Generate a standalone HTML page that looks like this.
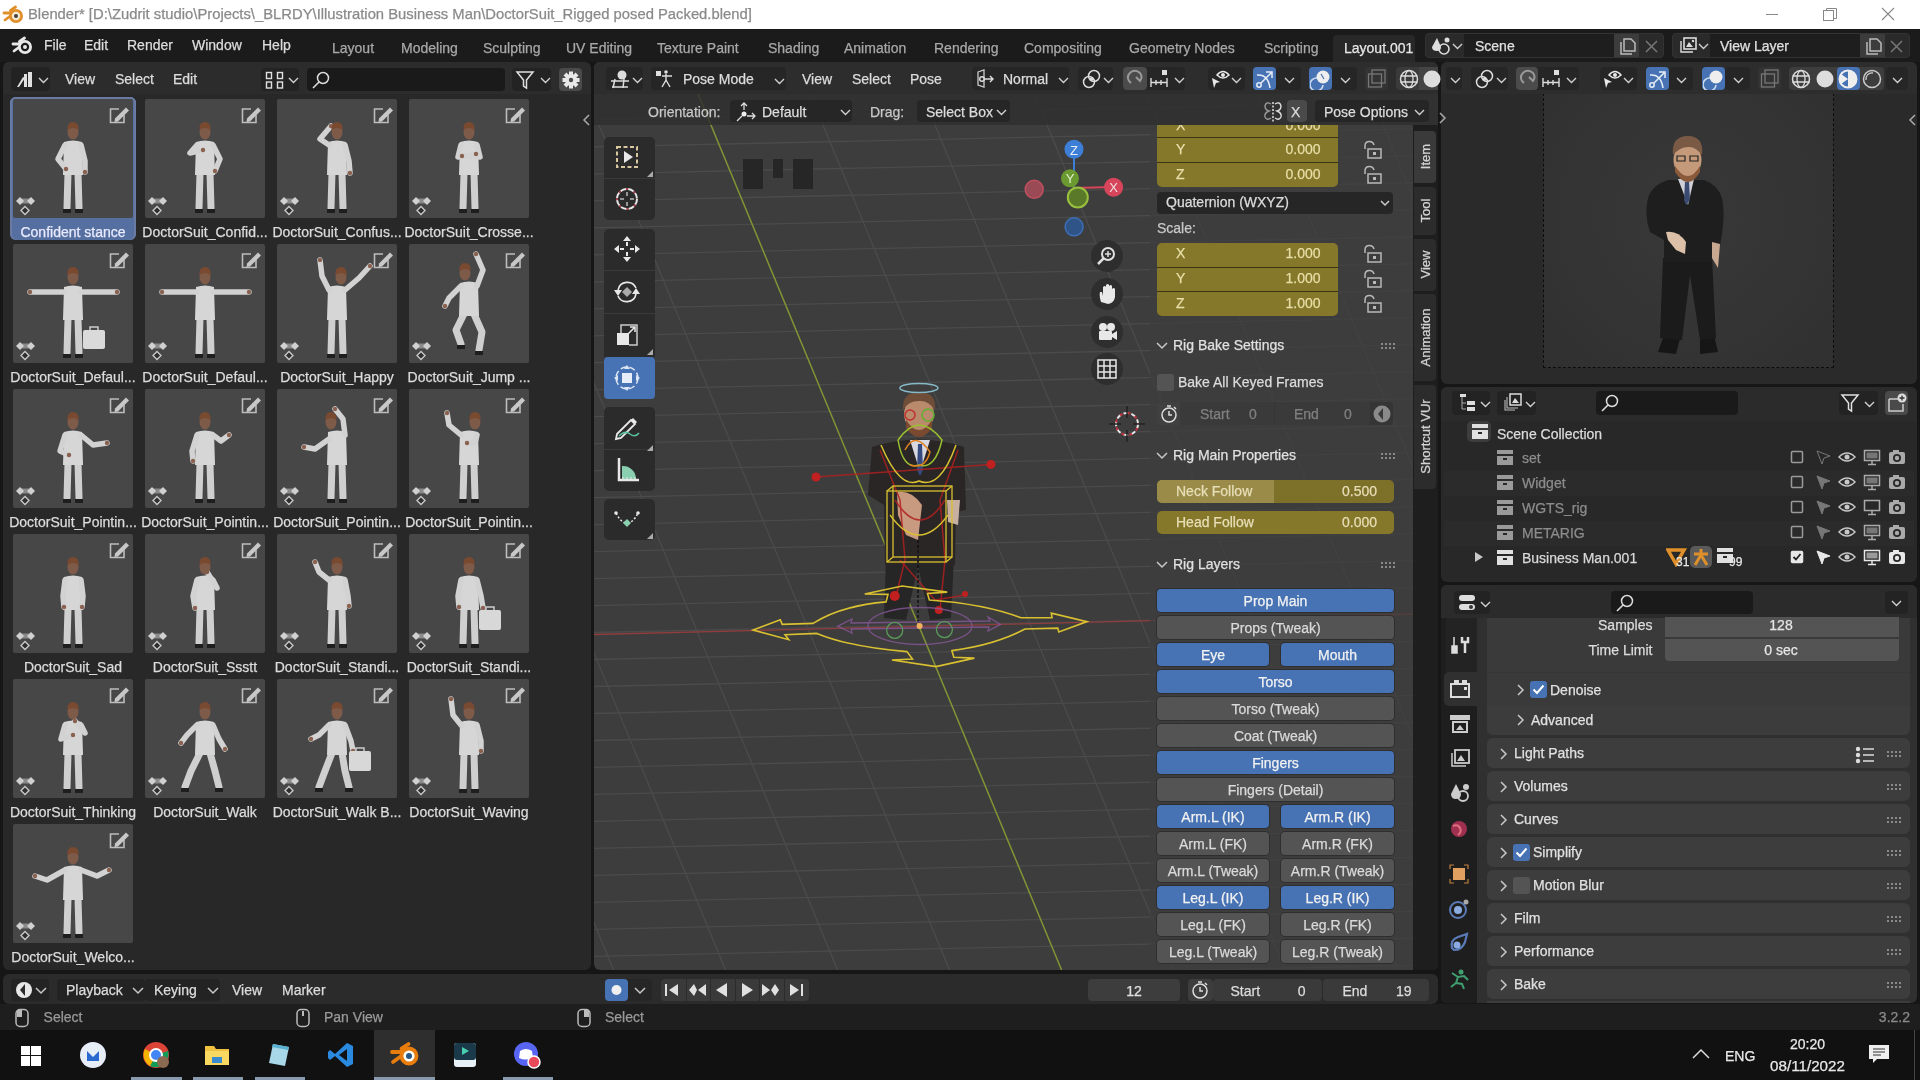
<!DOCTYPE html><html><head><meta charset="utf-8"><style>
*{margin:0;padding:0;box-sizing:border-box}
html,body{width:1920px;height:1080px;overflow:hidden;background:#161616;font-family:"Liberation Sans",sans-serif}
div,svg{position:absolute}
.t{white-space:nowrap;line-height:1;-webkit-text-stroke:0.25px currentColor}
</style></head><body><div id="root" style="left:0;top:0;width:1920px;height:1080px;will-change:transform"><div style="left:0px;top:0px;width:1920px;height:29px;background:#ffffff;"></div>
<div class="t" style="left:28px;top:6.97px;font-size:14.8px;color:#8a8a8a;">Blender* [D:\Zudrit studio\Projects\_BLRDY\Illustration Business Man\DoctorSuit_Rigged posed Packed.blend]</div>
<svg style="position:absolute;left:1760px;top:6px;" width="24" height="18" viewBox="0 0 24 18"><line x1="6" y1="8.5" x2="18" y2="8.5" stroke="#888" stroke-width="1"/></svg>
<svg style="position:absolute;left:1817px;top:6px;" width="24" height="18" viewBox="0 0 24 18"><rect x="6.5" y="4.5" width="10" height="10" fill="none" stroke="#888"/><path d="M9.5 4.5 V2.5 H19.5 V12.5 H16.5" fill="none" stroke="#888"/></svg>
<svg style="position:absolute;left:1876px;top:4px;" width="24" height="22" viewBox="0 0 24 22"><path d="M6 4 L18 16 M18 4 L6 16" stroke="#888" stroke-width="1.1"/></svg>
<div style="left:0px;top:29px;width:1920px;height:33px;background:#1b1b1b;"></div>
<div class="t" style="left:44px;top:38.15px;font-size:14px;color:#dcdcdc;">File</div>
<div class="t" style="left:84px;top:38.15px;font-size:14px;color:#dcdcdc;">Edit</div>
<div class="t" style="left:127px;top:38.15px;font-size:14px;color:#dcdcdc;">Render</div>
<div class="t" style="left:192px;top:38.15px;font-size:14px;color:#dcdcdc;">Window</div>
<div class="t" style="left:262px;top:38.15px;font-size:14px;color:#dcdcdc;">Help</div>
<div class="t" style="left:332px;top:41.15px;font-size:14px;color:#a8a8a8;">Layout</div>
<div class="t" style="left:401px;top:41.15px;font-size:14px;color:#a8a8a8;">Modeling</div>
<div class="t" style="left:483px;top:41.15px;font-size:14px;color:#a8a8a8;">Sculpting</div>
<div class="t" style="left:566px;top:41.15px;font-size:14px;color:#a8a8a8;">UV Editing</div>
<div class="t" style="left:657px;top:41.15px;font-size:14px;color:#a8a8a8;">Texture Paint</div>
<div class="t" style="left:768px;top:41.15px;font-size:14px;color:#a8a8a8;">Shading</div>
<div class="t" style="left:844px;top:41.15px;font-size:14px;color:#a8a8a8;">Animation</div>
<div class="t" style="left:934px;top:41.15px;font-size:14px;color:#a8a8a8;">Rendering</div>
<div class="t" style="left:1024px;top:41.15px;font-size:14px;color:#a8a8a8;">Compositing</div>
<div class="t" style="left:1129px;top:41.15px;font-size:14px;color:#a8a8a8;">Geometry Nodes</div>
<div class="t" style="left:1264px;top:41.15px;font-size:14px;color:#a8a8a8;">Scripting</div>
<div style="left:1333px;top:35px;width:82px;height:27px;background:#282828;border-radius:4px;border-radius:4px 4px 0 0"></div>
<div class="t" style="left:1344px;top:41.15px;font-size:14px;color:#e6e6e6;">Layout.001</div>
<div style="left:1425px;top:33px;width:239px;height:25px;background:#2a2a2a;border-radius:4px;border:1px solid #333"></div>
<div style="left:1464px;top:34px;width:150px;height:23px;background:#1e1e1e;"></div>
<div style="left:1614px;top:34px;width:25px;height:23px;background:#3c3c3c;"></div>
<div class="t" style="left:1475px;top:39.15px;font-size:14px;color:#e0e0e0;">Scene</div>
<div style="left:1672px;top:33px;width:238px;height:25px;background:#2a2a2a;border-radius:4px;border:1px solid #333"></div>
<div style="left:1710px;top:34px;width:150px;height:23px;background:#1e1e1e;"></div>
<div style="left:1860px;top:34px;width:25px;height:23px;background:#3c3c3c;"></div>
<div class="t" style="left:1720px;top:39.15px;font-size:14px;color:#e0e0e0;">View Layer</div>
<div style="left:3px;top:62px;width:588px;height:908px;background:#282828;border-radius:6px;"></div>
<div style="left:3px;top:62px;width:588px;height:32px;background:#2c2c2c;border-radius:6px;border-radius:6px 6px 0 0"></div>
<div class="t" style="left:65px;top:72.15px;font-size:14px;color:#dcdcdc;">View</div>
<div class="t" style="left:115px;top:72.15px;font-size:14px;color:#dcdcdc;">Select</div>
<div class="t" style="left:173px;top:72.15px;font-size:14px;color:#dcdcdc;">Edit</div>
<div style="left:11px;top:67px;width:39px;height:24px;background:#232323;border-radius:4px;"></div>
<div style="left:261px;top:68px;width:38px;height:23px;background:#232323;border-radius:4px;"></div>
<div style="left:307px;top:68px;width:198px;height:23px;background:#1a1a1a;border-radius:4px;"></div>
<div style="left:512px;top:68px;width:39px;height:23px;background:#232323;border-radius:4px;"></div>
<div style="left:559px;top:68px;width:23px;height:23px;background:#4a4a4a;border-radius:4px;"></div>
<div style="left:10px;top:97px;width:126px;height:143px;background:#5570a0;border-radius:6px;box-shadow:inset 2px 0 0 #6a7aa2, inset -2px 0 0 #6a7aa2, inset 0 2px 0 #6a7aa2"></div>
<div style="left:13px;top:99px;width:120px;height:119px;background:#474747;border-radius:2px"></div>
<svg style="position:absolute;left:13px;top:99px;" width="120" height="119" viewBox="0 0 120 119"><g transform="translate(0,0)"><polyline points="55,74 54,109" fill="none" stroke="#cfcfcf" stroke-width="7" stroke-linecap="round" stroke-linejoin="round"/><polyline points="65,74 66,109" fill="none" stroke="#cfcfcf" stroke-width="7" stroke-linecap="round" stroke-linejoin="round"/><rect x="50" y="110" width="8" height="4" fill="#1e1e1e"/><rect x="62" y="110" width="8" height="4" fill="#1e1e1e"/><path d="M51 43 Q60 40 69 43 L70 76 L50 76 Z" fill="#d6d6d6"/><polyline points="52,46 45,60 53,70" fill="none" stroke="#d2d2d2" stroke-width="5.5" stroke-linecap="round" stroke-linejoin="round"/><polyline points="68,46 72,62 72,73" fill="none" stroke="#d2d2d2" stroke-width="5.5" stroke-linecap="round" stroke-linejoin="round"/><circle cx="53" cy="70" r="2.2" fill="#8a6050"/><circle cx="72" cy="73" r="2.2" fill="#8a6050"/><ellipse cx="60" cy="33" rx="5.5" ry="7.5" fill="#7e5a48"/><path d="M54.5 31 Q54 23 60 23 Q66 23 65.5 31 Q60 27 54.5 31Z" fill="#7a4a30"/></g><path d="M106 10 H97.5 V23.5 H111 V16" fill="none" stroke="#bdbdbd" stroke-width="1.6"/><path d="M102 19.5 L113 8.5 L116 11.5 L105 22.5 L101.5 23 Z" fill="#c8c8c8"/><rect x="7" y="99.5" width="11" height="5" fill="#8a8a8a"/><path d="M3 102 l4 -4 l4 4 l-4 4 z M14 102 l4 -4 l4 4 l-4 4 z" fill="#d0d0d0"/><path d="M12 107.5 l4 4 l-4 4 l-4 -4 z" fill="#2e2e2e" stroke="#c8c8c8" stroke-width="1.4"/></svg>
<div class="t" style="left:-227px;width:600px;text-align:center;top:225.15px;font-size:14px;color:#eaeaff;">Confident stance</div>
<div style="left:145px;top:99px;width:120px;height:119px;background:#474747;border-radius:2px"></div>
<svg style="position:absolute;left:145px;top:99px;" width="120" height="119" viewBox="0 0 120 119"><g transform="translate(0,0)"><polyline points="55,74 54,109" fill="none" stroke="#cfcfcf" stroke-width="7" stroke-linecap="round" stroke-linejoin="round"/><polyline points="65,74 66,109" fill="none" stroke="#cfcfcf" stroke-width="7" stroke-linecap="round" stroke-linejoin="round"/><rect x="50" y="110" width="8" height="4" fill="#1e1e1e"/><rect x="62" y="110" width="8" height="4" fill="#1e1e1e"/><path d="M51 43 Q60 40 69 43 L70 76 L50 76 Z" fill="#d6d6d6"/><polyline points="52,46 45,54 58,51" fill="none" stroke="#d2d2d2" stroke-width="5.5" stroke-linecap="round" stroke-linejoin="round"/><polyline points="68,46 75,60 70,72" fill="none" stroke="#d2d2d2" stroke-width="5.5" stroke-linecap="round" stroke-linejoin="round"/><circle cx="58" cy="51" r="2.2" fill="#8a6050"/><circle cx="70" cy="72" r="2.2" fill="#8a6050"/><ellipse cx="60" cy="33" rx="5.5" ry="7.5" fill="#7e5a48"/><path d="M54.5 31 Q54 23 60 23 Q66 23 65.5 31 Q60 27 54.5 31Z" fill="#7a4a30"/></g><path d="M106 10 H97.5 V23.5 H111 V16" fill="none" stroke="#bdbdbd" stroke-width="1.6"/><path d="M102 19.5 L113 8.5 L116 11.5 L105 22.5 L101.5 23 Z" fill="#c8c8c8"/><rect x="7" y="99.5" width="11" height="5" fill="#8a8a8a"/><path d="M3 102 l4 -4 l4 4 l-4 4 z M14 102 l4 -4 l4 4 l-4 4 z" fill="#d0d0d0"/><path d="M12 107.5 l4 4 l-4 4 l-4 -4 z" fill="#2e2e2e" stroke="#c8c8c8" stroke-width="1.4"/></svg>
<div class="t" style="left:-95px;width:600px;text-align:center;top:225.15px;font-size:14px;color:#dcdcdc;">DoctorSuit_Confid...</div>
<div style="left:277px;top:99px;width:120px;height:119px;background:#474747;border-radius:2px"></div>
<svg style="position:absolute;left:277px;top:99px;" width="120" height="119" viewBox="0 0 120 119"><g transform="translate(0,0)"><polyline points="55,74 54,109" fill="none" stroke="#cfcfcf" stroke-width="7" stroke-linecap="round" stroke-linejoin="round"/><polyline points="65,74 66,109" fill="none" stroke="#cfcfcf" stroke-width="7" stroke-linecap="round" stroke-linejoin="round"/><rect x="50" y="110" width="8" height="4" fill="#1e1e1e"/><rect x="62" y="110" width="8" height="4" fill="#1e1e1e"/><path d="M51 43 Q60 40 69 43 L70 76 L50 76 Z" fill="#d6d6d6"/><polyline points="52,46 43,40 54,27" fill="none" stroke="#d2d2d2" stroke-width="5.5" stroke-linecap="round" stroke-linejoin="round"/><polyline points="68,46 72,62 73,74" fill="none" stroke="#d2d2d2" stroke-width="5.5" stroke-linecap="round" stroke-linejoin="round"/><circle cx="54" cy="27" r="2.2" fill="#8a6050"/><circle cx="73" cy="74" r="2.2" fill="#8a6050"/><ellipse cx="60" cy="33" rx="5.5" ry="7.5" fill="#7e5a48"/><path d="M54.5 31 Q54 23 60 23 Q66 23 65.5 31 Q60 27 54.5 31Z" fill="#7a4a30"/></g><path d="M106 10 H97.5 V23.5 H111 V16" fill="none" stroke="#bdbdbd" stroke-width="1.6"/><path d="M102 19.5 L113 8.5 L116 11.5 L105 22.5 L101.5 23 Z" fill="#c8c8c8"/><rect x="7" y="99.5" width="11" height="5" fill="#8a8a8a"/><path d="M3 102 l4 -4 l4 4 l-4 4 z M14 102 l4 -4 l4 4 l-4 4 z" fill="#d0d0d0"/><path d="M12 107.5 l4 4 l-4 4 l-4 -4 z" fill="#2e2e2e" stroke="#c8c8c8" stroke-width="1.4"/></svg>
<div class="t" style="left:37px;width:600px;text-align:center;top:225.15px;font-size:14px;color:#dcdcdc;">DoctorSuit_Confus...</div>
<div style="left:409px;top:99px;width:120px;height:119px;background:#474747;border-radius:2px"></div>
<svg style="position:absolute;left:409px;top:99px;" width="120" height="119" viewBox="0 0 120 119"><g transform="translate(0,0)"><polyline points="55,74 54,109" fill="none" stroke="#cfcfcf" stroke-width="7" stroke-linecap="round" stroke-linejoin="round"/><polyline points="65,74 66,109" fill="none" stroke="#cfcfcf" stroke-width="7" stroke-linecap="round" stroke-linejoin="round"/><rect x="50" y="110" width="8" height="4" fill="#1e1e1e"/><rect x="62" y="110" width="8" height="4" fill="#1e1e1e"/><path d="M51 43 Q60 40 69 43 L70 76 L50 76 Z" fill="#d6d6d6"/><polyline points="52,46 49,58 67,55" fill="none" stroke="#d2d2d2" stroke-width="5.5" stroke-linecap="round" stroke-linejoin="round"/><polyline points="68,46 71,58 53,57" fill="none" stroke="#d2d2d2" stroke-width="5.5" stroke-linecap="round" stroke-linejoin="round"/><circle cx="67" cy="55" r="2.2" fill="#8a6050"/><circle cx="53" cy="57" r="2.2" fill="#8a6050"/><ellipse cx="60" cy="33" rx="5.5" ry="7.5" fill="#7e5a48"/><path d="M54.5 31 Q54 23 60 23 Q66 23 65.5 31 Q60 27 54.5 31Z" fill="#7a4a30"/></g><path d="M106 10 H97.5 V23.5 H111 V16" fill="none" stroke="#bdbdbd" stroke-width="1.6"/><path d="M102 19.5 L113 8.5 L116 11.5 L105 22.5 L101.5 23 Z" fill="#c8c8c8"/><rect x="7" y="99.5" width="11" height="5" fill="#8a8a8a"/><path d="M3 102 l4 -4 l4 4 l-4 4 z M14 102 l4 -4 l4 4 l-4 4 z" fill="#d0d0d0"/><path d="M12 107.5 l4 4 l-4 4 l-4 -4 z" fill="#2e2e2e" stroke="#c8c8c8" stroke-width="1.4"/></svg>
<div class="t" style="left:169px;width:600px;text-align:center;top:225.15px;font-size:14px;color:#dcdcdc;">DoctorSuit_Crosse...</div>
<div style="left:13px;top:244px;width:120px;height:119px;background:#474747;border-radius:2px"></div>
<svg style="position:absolute;left:13px;top:244px;" width="120" height="119" viewBox="0 0 120 119"><g transform="translate(0,0)"><polyline points="55,74 54,109" fill="none" stroke="#cfcfcf" stroke-width="7" stroke-linecap="round" stroke-linejoin="round"/><polyline points="65,74 66,109" fill="none" stroke="#cfcfcf" stroke-width="7" stroke-linecap="round" stroke-linejoin="round"/><rect x="50" y="110" width="8" height="4" fill="#1e1e1e"/><rect x="62" y="110" width="8" height="4" fill="#1e1e1e"/><path d="M51 43 Q60 40 69 43 L70 76 L50 76 Z" fill="#d6d6d6"/><polyline points="52,48 17,48" fill="none" stroke="#d2d2d2" stroke-width="5.5" stroke-linecap="round" stroke-linejoin="round"/><polyline points="68,48 104,48" fill="none" stroke="#d2d2d2" stroke-width="5.5" stroke-linecap="round" stroke-linejoin="round"/><circle cx="17" cy="48" r="2.2" fill="#8a6050"/><circle cx="104" cy="48" r="2.2" fill="#8a6050"/><ellipse cx="60" cy="33" rx="5.5" ry="7.5" fill="#7e5a48"/><path d="M54.5 31 Q54 23 60 23 Q66 23 65.5 31 Q60 27 54.5 31Z" fill="#7a4a30"/></g><path d="M106 10 H97.5 V23.5 H111 V16" fill="none" stroke="#bdbdbd" stroke-width="1.6"/><path d="M102 19.5 L113 8.5 L116 11.5 L105 22.5 L101.5 23 Z" fill="#c8c8c8"/><rect x="7" y="99.5" width="11" height="5" fill="#8a8a8a"/><path d="M3 102 l4 -4 l4 4 l-4 4 z M14 102 l4 -4 l4 4 l-4 4 z" fill="#d0d0d0"/><path d="M12 107.5 l4 4 l-4 4 l-4 -4 z" fill="#2e2e2e" stroke="#c8c8c8" stroke-width="1.4"/></svg>
<div class="t" style="left:-227px;width:600px;text-align:center;top:370.15px;font-size:14px;color:#dcdcdc;">DoctorSuit_Defaul...</div>
<div style="left:145px;top:244px;width:120px;height:119px;background:#474747;border-radius:2px"></div>
<svg style="position:absolute;left:145px;top:244px;" width="120" height="119" viewBox="0 0 120 119"><g transform="translate(0,0)"><polyline points="55,74 54,109" fill="none" stroke="#cfcfcf" stroke-width="7" stroke-linecap="round" stroke-linejoin="round"/><polyline points="65,74 66,109" fill="none" stroke="#cfcfcf" stroke-width="7" stroke-linecap="round" stroke-linejoin="round"/><rect x="50" y="110" width="8" height="4" fill="#1e1e1e"/><rect x="62" y="110" width="8" height="4" fill="#1e1e1e"/><path d="M51 43 Q60 40 69 43 L70 76 L50 76 Z" fill="#d6d6d6"/><polyline points="52,48 17,48" fill="none" stroke="#d2d2d2" stroke-width="5.5" stroke-linecap="round" stroke-linejoin="round"/><polyline points="68,48 104,48" fill="none" stroke="#d2d2d2" stroke-width="5.5" stroke-linecap="round" stroke-linejoin="round"/><circle cx="17" cy="48" r="2.2" fill="#8a6050"/><circle cx="104" cy="48" r="2.2" fill="#8a6050"/><ellipse cx="60" cy="33" rx="5.5" ry="7.5" fill="#7e5a48"/><path d="M54.5 31 Q54 23 60 23 Q66 23 65.5 31 Q60 27 54.5 31Z" fill="#7a4a30"/></g><path d="M106 10 H97.5 V23.5 H111 V16" fill="none" stroke="#bdbdbd" stroke-width="1.6"/><path d="M102 19.5 L113 8.5 L116 11.5 L105 22.5 L101.5 23 Z" fill="#c8c8c8"/><rect x="7" y="99.5" width="11" height="5" fill="#8a8a8a"/><path d="M3 102 l4 -4 l4 4 l-4 4 z M14 102 l4 -4 l4 4 l-4 4 z" fill="#d0d0d0"/><path d="M12 107.5 l4 4 l-4 4 l-4 -4 z" fill="#2e2e2e" stroke="#c8c8c8" stroke-width="1.4"/></svg>
<div class="t" style="left:-95px;width:600px;text-align:center;top:370.15px;font-size:14px;color:#dcdcdc;">DoctorSuit_Defaul...</div>
<div style="left:277px;top:244px;width:120px;height:119px;background:#474747;border-radius:2px"></div>
<svg style="position:absolute;left:277px;top:244px;" width="120" height="119" viewBox="0 0 120 119"><g transform="translate(0,0)"><polyline points="55,74 54,109" fill="none" stroke="#cfcfcf" stroke-width="7" stroke-linecap="round" stroke-linejoin="round"/><polyline points="65,74 66,109" fill="none" stroke="#cfcfcf" stroke-width="7" stroke-linecap="round" stroke-linejoin="round"/><rect x="50" y="110" width="8" height="4" fill="#1e1e1e"/><rect x="62" y="110" width="8" height="4" fill="#1e1e1e"/><path d="M51 43 Q60 40 69 43 L70 76 L50 76 Z" fill="#d6d6d6"/><polyline points="52,46 45,32 43,16" fill="none" stroke="#d2d2d2" stroke-width="5.5" stroke-linecap="round" stroke-linejoin="round"/><polyline points="68,46 82,34 93,22" fill="none" stroke="#d2d2d2" stroke-width="5.5" stroke-linecap="round" stroke-linejoin="round"/><circle cx="43" cy="16" r="2.2" fill="#8a6050"/><circle cx="93" cy="22" r="2.2" fill="#8a6050"/><ellipse cx="64" cy="33" rx="5.5" ry="7.5" fill="#7e5a48"/><path d="M58.5 31 Q58 23 64 23 Q70 23 69.5 31 Q64 27 58.5 31Z" fill="#7a4a30"/></g><path d="M106 10 H97.5 V23.5 H111 V16" fill="none" stroke="#bdbdbd" stroke-width="1.6"/><path d="M102 19.5 L113 8.5 L116 11.5 L105 22.5 L101.5 23 Z" fill="#c8c8c8"/><rect x="7" y="99.5" width="11" height="5" fill="#8a8a8a"/><path d="M3 102 l4 -4 l4 4 l-4 4 z M14 102 l4 -4 l4 4 l-4 4 z" fill="#d0d0d0"/><path d="M12 107.5 l4 4 l-4 4 l-4 -4 z" fill="#2e2e2e" stroke="#c8c8c8" stroke-width="1.4"/></svg>
<div class="t" style="left:37px;width:600px;text-align:center;top:370.15px;font-size:14px;color:#dcdcdc;">DoctorSuit_Happy</div>
<div style="left:409px;top:244px;width:120px;height:119px;background:#474747;border-radius:2px"></div>
<svg style="position:absolute;left:409px;top:244px;" width="120" height="119" viewBox="0 0 120 119"><g transform="translate(0,-4)"><polyline points="55,74 47,90 52,104" fill="none" stroke="#cfcfcf" stroke-width="7" stroke-linecap="round" stroke-linejoin="round"/><polyline points="65,74 73,92 70,110" fill="none" stroke="#cfcfcf" stroke-width="7" stroke-linecap="round" stroke-linejoin="round"/><rect x="48" y="105" width="8" height="4" fill="#1e1e1e"/><rect x="66" y="111" width="8" height="4" fill="#1e1e1e"/><path d="M51 43 Q60 40 69 43 L70 76 L50 76 Z" fill="#d6d6d6"/><polyline points="52,46 40,58 36,66" fill="none" stroke="#d2d2d2" stroke-width="5.5" stroke-linecap="round" stroke-linejoin="round"/><polyline points="68,46 74,30 67,14" fill="none" stroke="#d2d2d2" stroke-width="5.5" stroke-linecap="round" stroke-linejoin="round"/><circle cx="36" cy="66" r="2.2" fill="#8a6050"/><circle cx="67" cy="14" r="2.2" fill="#8a6050"/><ellipse cx="56" cy="33" rx="5.5" ry="7.5" fill="#7e5a48"/><path d="M50.5 31 Q50 23 56 23 Q62 23 61.5 31 Q56 27 50.5 31Z" fill="#7a4a30"/></g><path d="M106 10 H97.5 V23.5 H111 V16" fill="none" stroke="#bdbdbd" stroke-width="1.6"/><path d="M102 19.5 L113 8.5 L116 11.5 L105 22.5 L101.5 23 Z" fill="#c8c8c8"/><rect x="7" y="99.5" width="11" height="5" fill="#8a8a8a"/><path d="M3 102 l4 -4 l4 4 l-4 4 z M14 102 l4 -4 l4 4 l-4 4 z" fill="#d0d0d0"/><path d="M12 107.5 l4 4 l-4 4 l-4 -4 z" fill="#2e2e2e" stroke="#c8c8c8" stroke-width="1.4"/></svg>
<div class="t" style="left:169px;width:600px;text-align:center;top:370.15px;font-size:14px;color:#dcdcdc;">DoctorSuit_Jump ...</div>
<div style="left:13px;top:389px;width:120px;height:119px;background:#474747;border-radius:2px"></div>
<svg style="position:absolute;left:13px;top:389px;" width="120" height="119" viewBox="0 0 120 119"><g transform="translate(0,0)"><polyline points="55,74 54,109" fill="none" stroke="#cfcfcf" stroke-width="7" stroke-linecap="round" stroke-linejoin="round"/><polyline points="65,74 66,109" fill="none" stroke="#cfcfcf" stroke-width="7" stroke-linecap="round" stroke-linejoin="round"/><rect x="50" y="110" width="8" height="4" fill="#1e1e1e"/><rect x="62" y="110" width="8" height="4" fill="#1e1e1e"/><path d="M51 43 Q60 40 69 43 L70 76 L50 76 Z" fill="#d6d6d6"/><polyline points="52,46 47,62 56,66" fill="none" stroke="#d2d2d2" stroke-width="5.5" stroke-linecap="round" stroke-linejoin="round"/><polyline points="68,46 80,56 94,54" fill="none" stroke="#d2d2d2" stroke-width="5.5" stroke-linecap="round" stroke-linejoin="round"/><circle cx="56" cy="66" r="2.2" fill="#8a6050"/><circle cx="94" cy="54" r="2.2" fill="#8a6050"/><ellipse cx="60" cy="33" rx="5.5" ry="7.5" fill="#7e5a48"/><path d="M54.5 31 Q54 23 60 23 Q66 23 65.5 31 Q60 27 54.5 31Z" fill="#7a4a30"/></g><path d="M106 10 H97.5 V23.5 H111 V16" fill="none" stroke="#bdbdbd" stroke-width="1.6"/><path d="M102 19.5 L113 8.5 L116 11.5 L105 22.5 L101.5 23 Z" fill="#c8c8c8"/><rect x="7" y="99.5" width="11" height="5" fill="#8a8a8a"/><path d="M3 102 l4 -4 l4 4 l-4 4 z M14 102 l4 -4 l4 4 l-4 4 z" fill="#d0d0d0"/><path d="M12 107.5 l4 4 l-4 4 l-4 -4 z" fill="#2e2e2e" stroke="#c8c8c8" stroke-width="1.4"/></svg>
<div class="t" style="left:-227px;width:600px;text-align:center;top:515.15px;font-size:14px;color:#dcdcdc;">DoctorSuit_Pointin...</div>
<div style="left:145px;top:389px;width:120px;height:119px;background:#474747;border-radius:2px"></div>
<svg style="position:absolute;left:145px;top:389px;" width="120" height="119" viewBox="0 0 120 119"><g transform="translate(0,0)"><polyline points="55,74 54,109" fill="none" stroke="#cfcfcf" stroke-width="7" stroke-linecap="round" stroke-linejoin="round"/><polyline points="65,74 66,109" fill="none" stroke="#cfcfcf" stroke-width="7" stroke-linecap="round" stroke-linejoin="round"/><rect x="50" y="110" width="8" height="4" fill="#1e1e1e"/><rect x="62" y="110" width="8" height="4" fill="#1e1e1e"/><path d="M51 43 Q60 40 69 43 L70 76 L50 76 Z" fill="#d6d6d6"/><polyline points="52,46 47,62 48,72" fill="none" stroke="#d2d2d2" stroke-width="5.5" stroke-linecap="round" stroke-linejoin="round"/><polyline points="68,46 76,52 84,46" fill="none" stroke="#d2d2d2" stroke-width="5.5" stroke-linecap="round" stroke-linejoin="round"/><circle cx="48" cy="72" r="2.2" fill="#8a6050"/><circle cx="84" cy="46" r="2.2" fill="#8a6050"/><ellipse cx="60" cy="33" rx="5.5" ry="7.5" fill="#7e5a48"/><path d="M54.5 31 Q54 23 60 23 Q66 23 65.5 31 Q60 27 54.5 31Z" fill="#7a4a30"/></g><path d="M106 10 H97.5 V23.5 H111 V16" fill="none" stroke="#bdbdbd" stroke-width="1.6"/><path d="M102 19.5 L113 8.5 L116 11.5 L105 22.5 L101.5 23 Z" fill="#c8c8c8"/><rect x="7" y="99.5" width="11" height="5" fill="#8a8a8a"/><path d="M3 102 l4 -4 l4 4 l-4 4 z M14 102 l4 -4 l4 4 l-4 4 z" fill="#d0d0d0"/><path d="M12 107.5 l4 4 l-4 4 l-4 -4 z" fill="#2e2e2e" stroke="#c8c8c8" stroke-width="1.4"/></svg>
<div class="t" style="left:-95px;width:600px;text-align:center;top:515.15px;font-size:14px;color:#dcdcdc;">DoctorSuit_Pointin...</div>
<div style="left:277px;top:389px;width:120px;height:119px;background:#474747;border-radius:2px"></div>
<svg style="position:absolute;left:277px;top:389px;" width="120" height="119" viewBox="0 0 120 119"><g transform="translate(0,0)"><polyline points="55,74 54,109" fill="none" stroke="#cfcfcf" stroke-width="7" stroke-linecap="round" stroke-linejoin="round"/><polyline points="65,74 66,109" fill="none" stroke="#cfcfcf" stroke-width="7" stroke-linecap="round" stroke-linejoin="round"/><rect x="50" y="110" width="8" height="4" fill="#1e1e1e"/><rect x="62" y="110" width="8" height="4" fill="#1e1e1e"/><path d="M51 43 Q60 40 69 43 L70 76 L50 76 Z" fill="#d6d6d6"/><polyline points="52,50 38,60 27,58" fill="none" stroke="#d2d2d2" stroke-width="5.5" stroke-linecap="round" stroke-linejoin="round"/><polyline points="68,46 66,30 58,20" fill="none" stroke="#d2d2d2" stroke-width="5.5" stroke-linecap="round" stroke-linejoin="round"/><circle cx="27" cy="58" r="2.2" fill="#8a6050"/><circle cx="58" cy="20" r="2.2" fill="#8a6050"/><ellipse cx="54" cy="33" rx="5.5" ry="7.5" fill="#7e5a48"/><path d="M48.5 31 Q48 23 54 23 Q60 23 59.5 31 Q54 27 48.5 31Z" fill="#7a4a30"/></g><path d="M106 10 H97.5 V23.5 H111 V16" fill="none" stroke="#bdbdbd" stroke-width="1.6"/><path d="M102 19.5 L113 8.5 L116 11.5 L105 22.5 L101.5 23 Z" fill="#c8c8c8"/><rect x="7" y="99.5" width="11" height="5" fill="#8a8a8a"/><path d="M3 102 l4 -4 l4 4 l-4 4 z M14 102 l4 -4 l4 4 l-4 4 z" fill="#d0d0d0"/><path d="M12 107.5 l4 4 l-4 4 l-4 -4 z" fill="#2e2e2e" stroke="#c8c8c8" stroke-width="1.4"/></svg>
<div class="t" style="left:37px;width:600px;text-align:center;top:515.15px;font-size:14px;color:#dcdcdc;">DoctorSuit_Pointin...</div>
<div style="left:409px;top:389px;width:120px;height:119px;background:#474747;border-radius:2px"></div>
<svg style="position:absolute;left:409px;top:389px;" width="120" height="119" viewBox="0 0 120 119"><g transform="translate(0,0)"><polyline points="55,74 54,109" fill="none" stroke="#cfcfcf" stroke-width="7" stroke-linecap="round" stroke-linejoin="round"/><polyline points="65,74 66,109" fill="none" stroke="#cfcfcf" stroke-width="7" stroke-linecap="round" stroke-linejoin="round"/><rect x="50" y="110" width="8" height="4" fill="#1e1e1e"/><rect x="62" y="110" width="8" height="4" fill="#1e1e1e"/><path d="M51 43 Q60 40 69 43 L70 76 L50 76 Z" fill="#d6d6d6"/><polyline points="52,46 40,36 38,24" fill="none" stroke="#d2d2d2" stroke-width="5.5" stroke-linecap="round" stroke-linejoin="round"/><polyline points="68,46 66,54 58,54" fill="none" stroke="#d2d2d2" stroke-width="5.5" stroke-linecap="round" stroke-linejoin="round"/><circle cx="38" cy="24" r="2.2" fill="#8a6050"/><circle cx="58" cy="54" r="2.2" fill="#8a6050"/><ellipse cx="66" cy="33" rx="5.5" ry="7.5" fill="#7e5a48"/><path d="M60.5 31 Q60 23 66 23 Q72 23 71.5 31 Q66 27 60.5 31Z" fill="#7a4a30"/></g><path d="M106 10 H97.5 V23.5 H111 V16" fill="none" stroke="#bdbdbd" stroke-width="1.6"/><path d="M102 19.5 L113 8.5 L116 11.5 L105 22.5 L101.5 23 Z" fill="#c8c8c8"/><rect x="7" y="99.5" width="11" height="5" fill="#8a8a8a"/><path d="M3 102 l4 -4 l4 4 l-4 4 z M14 102 l4 -4 l4 4 l-4 4 z" fill="#d0d0d0"/><path d="M12 107.5 l4 4 l-4 4 l-4 -4 z" fill="#2e2e2e" stroke="#c8c8c8" stroke-width="1.4"/></svg>
<div class="t" style="left:169px;width:600px;text-align:center;top:515.15px;font-size:14px;color:#dcdcdc;">DoctorSuit_Pointin...</div>
<div style="left:13px;top:534px;width:120px;height:119px;background:#474747;border-radius:2px"></div>
<svg style="position:absolute;left:13px;top:534px;" width="120" height="119" viewBox="0 0 120 119"><g transform="translate(0,0)"><polyline points="55,74 54,109" fill="none" stroke="#cfcfcf" stroke-width="7" stroke-linecap="round" stroke-linejoin="round"/><polyline points="65,74 66,109" fill="none" stroke="#cfcfcf" stroke-width="7" stroke-linecap="round" stroke-linejoin="round"/><rect x="50" y="110" width="8" height="4" fill="#1e1e1e"/><rect x="62" y="110" width="8" height="4" fill="#1e1e1e"/><path d="M51 43 Q60 40 69 43 L70 76 L50 76 Z" fill="#d6d6d6"/><polyline points="52,46 50,62 51,73" fill="none" stroke="#d2d2d2" stroke-width="5.5" stroke-linecap="round" stroke-linejoin="round"/><polyline points="68,46 70,62 69,73" fill="none" stroke="#d2d2d2" stroke-width="5.5" stroke-linecap="round" stroke-linejoin="round"/><circle cx="51" cy="73" r="2.2" fill="#8a6050"/><circle cx="69" cy="73" r="2.2" fill="#8a6050"/><ellipse cx="60" cy="33" rx="5.5" ry="7.5" fill="#7e5a48"/><path d="M54.5 31 Q54 23 60 23 Q66 23 65.5 31 Q60 27 54.5 31Z" fill="#7a4a30"/></g><path d="M106 10 H97.5 V23.5 H111 V16" fill="none" stroke="#bdbdbd" stroke-width="1.6"/><path d="M102 19.5 L113 8.5 L116 11.5 L105 22.5 L101.5 23 Z" fill="#c8c8c8"/><rect x="7" y="99.5" width="11" height="5" fill="#8a8a8a"/><path d="M3 102 l4 -4 l4 4 l-4 4 z M14 102 l4 -4 l4 4 l-4 4 z" fill="#d0d0d0"/><path d="M12 107.5 l4 4 l-4 4 l-4 -4 z" fill="#2e2e2e" stroke="#c8c8c8" stroke-width="1.4"/></svg>
<div class="t" style="left:-227px;width:600px;text-align:center;top:660.15px;font-size:14px;color:#dcdcdc;">DoctorSuit_Sad</div>
<div style="left:145px;top:534px;width:120px;height:119px;background:#474747;border-radius:2px"></div>
<svg style="position:absolute;left:145px;top:534px;" width="120" height="119" viewBox="0 0 120 119"><g transform="translate(0,0)"><polyline points="55,74 54,109" fill="none" stroke="#cfcfcf" stroke-width="7" stroke-linecap="round" stroke-linejoin="round"/><polyline points="65,74 66,109" fill="none" stroke="#cfcfcf" stroke-width="7" stroke-linecap="round" stroke-linejoin="round"/><rect x="50" y="110" width="8" height="4" fill="#1e1e1e"/><rect x="62" y="110" width="8" height="4" fill="#1e1e1e"/><path d="M51 43 Q60 40 69 43 L70 76 L50 76 Z" fill="#d6d6d6"/><polyline points="52,46 48,62 50,74" fill="none" stroke="#d2d2d2" stroke-width="5.5" stroke-linecap="round" stroke-linejoin="round"/><polyline points="68,46 72,54 62,38" fill="none" stroke="#d2d2d2" stroke-width="5.5" stroke-linecap="round" stroke-linejoin="round"/><circle cx="50" cy="74" r="2.2" fill="#8a6050"/><circle cx="62" cy="38" r="2.2" fill="#8a6050"/><ellipse cx="60" cy="33" rx="5.5" ry="7.5" fill="#7e5a48"/><path d="M54.5 31 Q54 23 60 23 Q66 23 65.5 31 Q60 27 54.5 31Z" fill="#7a4a30"/></g><path d="M106 10 H97.5 V23.5 H111 V16" fill="none" stroke="#bdbdbd" stroke-width="1.6"/><path d="M102 19.5 L113 8.5 L116 11.5 L105 22.5 L101.5 23 Z" fill="#c8c8c8"/><rect x="7" y="99.5" width="11" height="5" fill="#8a8a8a"/><path d="M3 102 l4 -4 l4 4 l-4 4 z M14 102 l4 -4 l4 4 l-4 4 z" fill="#d0d0d0"/><path d="M12 107.5 l4 4 l-4 4 l-4 -4 z" fill="#2e2e2e" stroke="#c8c8c8" stroke-width="1.4"/></svg>
<div class="t" style="left:-95px;width:600px;text-align:center;top:660.15px;font-size:14px;color:#dcdcdc;">DoctorSuit_Ssstt</div>
<div style="left:277px;top:534px;width:120px;height:119px;background:#474747;border-radius:2px"></div>
<svg style="position:absolute;left:277px;top:534px;" width="120" height="119" viewBox="0 0 120 119"><g transform="translate(0,0)"><polyline points="55,74 54,109" fill="none" stroke="#cfcfcf" stroke-width="7" stroke-linecap="round" stroke-linejoin="round"/><polyline points="65,74 66,109" fill="none" stroke="#cfcfcf" stroke-width="7" stroke-linecap="round" stroke-linejoin="round"/><rect x="50" y="110" width="8" height="4" fill="#1e1e1e"/><rect x="62" y="110" width="8" height="4" fill="#1e1e1e"/><path d="M51 43 Q60 40 69 43 L70 76 L50 76 Z" fill="#d6d6d6"/><polyline points="52,46 42,38 38,28" fill="none" stroke="#d2d2d2" stroke-width="5.5" stroke-linecap="round" stroke-linejoin="round"/><polyline points="68,46 71,62 72,72" fill="none" stroke="#d2d2d2" stroke-width="5.5" stroke-linecap="round" stroke-linejoin="round"/><circle cx="38" cy="28" r="2.2" fill="#8a6050"/><circle cx="72" cy="72" r="2.2" fill="#8a6050"/><ellipse cx="60" cy="33" rx="5.5" ry="7.5" fill="#7e5a48"/><path d="M54.5 31 Q54 23 60 23 Q66 23 65.5 31 Q60 27 54.5 31Z" fill="#7a4a30"/></g><path d="M106 10 H97.5 V23.5 H111 V16" fill="none" stroke="#bdbdbd" stroke-width="1.6"/><path d="M102 19.5 L113 8.5 L116 11.5 L105 22.5 L101.5 23 Z" fill="#c8c8c8"/><rect x="7" y="99.5" width="11" height="5" fill="#8a8a8a"/><path d="M3 102 l4 -4 l4 4 l-4 4 z M14 102 l4 -4 l4 4 l-4 4 z" fill="#d0d0d0"/><path d="M12 107.5 l4 4 l-4 4 l-4 -4 z" fill="#2e2e2e" stroke="#c8c8c8" stroke-width="1.4"/></svg>
<div class="t" style="left:37px;width:600px;text-align:center;top:660.15px;font-size:14px;color:#dcdcdc;">DoctorSuit_Standi...</div>
<div style="left:409px;top:534px;width:120px;height:119px;background:#474747;border-radius:2px"></div>
<svg style="position:absolute;left:409px;top:534px;" width="120" height="119" viewBox="0 0 120 119"><g transform="translate(0,0)"><polyline points="55,74 54,109" fill="none" stroke="#cfcfcf" stroke-width="7" stroke-linecap="round" stroke-linejoin="round"/><polyline points="65,74 66,109" fill="none" stroke="#cfcfcf" stroke-width="7" stroke-linecap="round" stroke-linejoin="round"/><rect x="50" y="110" width="8" height="4" fill="#1e1e1e"/><rect x="62" y="110" width="8" height="4" fill="#1e1e1e"/><path d="M51 43 Q60 40 69 43 L70 76 L50 76 Z" fill="#d6d6d6"/><polyline points="52,46 49,62 50,73" fill="none" stroke="#d2d2d2" stroke-width="5.5" stroke-linecap="round" stroke-linejoin="round"/><polyline points="68,46 72,62 74,74" fill="none" stroke="#d2d2d2" stroke-width="5.5" stroke-linecap="round" stroke-linejoin="round"/><circle cx="50" cy="73" r="2.2" fill="#8a6050"/><circle cx="74" cy="74" r="2.2" fill="#8a6050"/><ellipse cx="60" cy="33" rx="5.5" ry="7.5" fill="#7e5a48"/><path d="M54.5 31 Q54 23 60 23 Q66 23 65.5 31 Q60 27 54.5 31Z" fill="#7a4a30"/></g><rect x="70" y="76" width="22" height="20" rx="2" fill="#d8d8d8"/><path d="M77 76 V73 H85 V76" fill="none" stroke="#ccc" stroke-width="1.5"/><path d="M106 10 H97.5 V23.5 H111 V16" fill="none" stroke="#bdbdbd" stroke-width="1.6"/><path d="M102 19.5 L113 8.5 L116 11.5 L105 22.5 L101.5 23 Z" fill="#c8c8c8"/><rect x="7" y="99.5" width="11" height="5" fill="#8a8a8a"/><path d="M3 102 l4 -4 l4 4 l-4 4 z M14 102 l4 -4 l4 4 l-4 4 z" fill="#d0d0d0"/><path d="M12 107.5 l4 4 l-4 4 l-4 -4 z" fill="#2e2e2e" stroke="#c8c8c8" stroke-width="1.4"/></svg>
<div class="t" style="left:169px;width:600px;text-align:center;top:660.15px;font-size:14px;color:#dcdcdc;">DoctorSuit_Standi...</div>
<div style="left:13px;top:679px;width:120px;height:119px;background:#474747;border-radius:2px"></div>
<svg style="position:absolute;left:13px;top:679px;" width="120" height="119" viewBox="0 0 120 119"><g transform="translate(0,0)"><polyline points="55,74 54,109" fill="none" stroke="#cfcfcf" stroke-width="7" stroke-linecap="round" stroke-linejoin="round"/><polyline points="65,74 66,109" fill="none" stroke="#cfcfcf" stroke-width="7" stroke-linecap="round" stroke-linejoin="round"/><rect x="50" y="110" width="8" height="4" fill="#1e1e1e"/><rect x="62" y="110" width="8" height="4" fill="#1e1e1e"/><path d="M51 43 Q60 40 69 43 L70 76 L50 76 Z" fill="#d6d6d6"/><polyline points="52,46 48,60 60,56" fill="none" stroke="#d2d2d2" stroke-width="5.5" stroke-linecap="round" stroke-linejoin="round"/><polyline points="68,46 72,54 62,42" fill="none" stroke="#d2d2d2" stroke-width="5.5" stroke-linecap="round" stroke-linejoin="round"/><circle cx="60" cy="56" r="2.2" fill="#8a6050"/><circle cx="62" cy="42" r="2.2" fill="#8a6050"/><ellipse cx="60" cy="33" rx="5.5" ry="7.5" fill="#7e5a48"/><path d="M54.5 31 Q54 23 60 23 Q66 23 65.5 31 Q60 27 54.5 31Z" fill="#7a4a30"/></g><path d="M106 10 H97.5 V23.5 H111 V16" fill="none" stroke="#bdbdbd" stroke-width="1.6"/><path d="M102 19.5 L113 8.5 L116 11.5 L105 22.5 L101.5 23 Z" fill="#c8c8c8"/><rect x="7" y="99.5" width="11" height="5" fill="#8a8a8a"/><path d="M3 102 l4 -4 l4 4 l-4 4 z M14 102 l4 -4 l4 4 l-4 4 z" fill="#d0d0d0"/><path d="M12 107.5 l4 4 l-4 4 l-4 -4 z" fill="#2e2e2e" stroke="#c8c8c8" stroke-width="1.4"/></svg>
<div class="t" style="left:-227px;width:600px;text-align:center;top:805.15px;font-size:14px;color:#dcdcdc;">DoctorSuit_Thinking</div>
<div style="left:145px;top:679px;width:120px;height:119px;background:#474747;border-radius:2px"></div>
<svg style="position:absolute;left:145px;top:679px;" width="120" height="119" viewBox="0 0 120 119"><g transform="translate(0,0)"><polyline points="55,74 46,92 40,108" fill="none" stroke="#cfcfcf" stroke-width="7" stroke-linecap="round" stroke-linejoin="round"/><polyline points="65,74 70,92 74,108" fill="none" stroke="#cfcfcf" stroke-width="7" stroke-linecap="round" stroke-linejoin="round"/><rect x="36" y="109" width="8" height="4" fill="#1e1e1e"/><rect x="70" y="109" width="8" height="4" fill="#1e1e1e"/><path d="M51 43 Q60 40 69 43 L70 76 L50 76 Z" fill="#d6d6d6"/><polyline points="52,46 42,56 36,64" fill="none" stroke="#d2d2d2" stroke-width="5.5" stroke-linecap="round" stroke-linejoin="round"/><polyline points="68,46 74,60 80,70" fill="none" stroke="#d2d2d2" stroke-width="5.5" stroke-linecap="round" stroke-linejoin="round"/><circle cx="36" cy="64" r="2.2" fill="#8a6050"/><circle cx="80" cy="70" r="2.2" fill="#8a6050"/><ellipse cx="60" cy="33" rx="5.5" ry="7.5" fill="#7e5a48"/><path d="M54.5 31 Q54 23 60 23 Q66 23 65.5 31 Q60 27 54.5 31Z" fill="#7a4a30"/></g><path d="M106 10 H97.5 V23.5 H111 V16" fill="none" stroke="#bdbdbd" stroke-width="1.6"/><path d="M102 19.5 L113 8.5 L116 11.5 L105 22.5 L101.5 23 Z" fill="#c8c8c8"/><rect x="7" y="99.5" width="11" height="5" fill="#8a8a8a"/><path d="M3 102 l4 -4 l4 4 l-4 4 z M14 102 l4 -4 l4 4 l-4 4 z" fill="#d0d0d0"/><path d="M12 107.5 l4 4 l-4 4 l-4 -4 z" fill="#2e2e2e" stroke="#c8c8c8" stroke-width="1.4"/></svg>
<div class="t" style="left:-95px;width:600px;text-align:center;top:805.15px;font-size:14px;color:#dcdcdc;">DoctorSuit_Walk</div>
<div style="left:277px;top:679px;width:120px;height:119px;background:#474747;border-radius:2px"></div>
<svg style="position:absolute;left:277px;top:679px;" width="120" height="119" viewBox="0 0 120 119"><g transform="translate(0,0)"><polyline points="55,74 48,92 42,108" fill="none" stroke="#cfcfcf" stroke-width="7" stroke-linecap="round" stroke-linejoin="round"/><polyline points="65,74 68,92 72,108" fill="none" stroke="#cfcfcf" stroke-width="7" stroke-linecap="round" stroke-linejoin="round"/><rect x="38" y="109" width="8" height="4" fill="#1e1e1e"/><rect x="68" y="109" width="8" height="4" fill="#1e1e1e"/><path d="M51 43 Q60 40 69 43 L70 76 L50 76 Z" fill="#d6d6d6"/><polyline points="52,46 42,56 34,60" fill="none" stroke="#d2d2d2" stroke-width="5.5" stroke-linecap="round" stroke-linejoin="round"/><polyline points="68,46 74,62 76,72" fill="none" stroke="#d2d2d2" stroke-width="5.5" stroke-linecap="round" stroke-linejoin="round"/><circle cx="34" cy="60" r="2.2" fill="#8a6050"/><circle cx="76" cy="72" r="2.2" fill="#8a6050"/><ellipse cx="60" cy="33" rx="5.5" ry="7.5" fill="#7e5a48"/><path d="M54.5 31 Q54 23 60 23 Q66 23 65.5 31 Q60 27 54.5 31Z" fill="#7a4a30"/></g><rect x="72" y="72" width="22" height="20" rx="2" fill="#d8d8d8"/><path d="M79 72 V69 H87 V72" fill="none" stroke="#ccc" stroke-width="1.5"/><path d="M106 10 H97.5 V23.5 H111 V16" fill="none" stroke="#bdbdbd" stroke-width="1.6"/><path d="M102 19.5 L113 8.5 L116 11.5 L105 22.5 L101.5 23 Z" fill="#c8c8c8"/><rect x="7" y="99.5" width="11" height="5" fill="#8a8a8a"/><path d="M3 102 l4 -4 l4 4 l-4 4 z M14 102 l4 -4 l4 4 l-4 4 z" fill="#d0d0d0"/><path d="M12 107.5 l4 4 l-4 4 l-4 -4 z" fill="#2e2e2e" stroke="#c8c8c8" stroke-width="1.4"/></svg>
<div class="t" style="left:37px;width:600px;text-align:center;top:805.15px;font-size:14px;color:#dcdcdc;">DoctorSuit_Walk B...</div>
<div style="left:409px;top:679px;width:120px;height:119px;background:#474747;border-radius:2px"></div>
<svg style="position:absolute;left:409px;top:679px;" width="120" height="119" viewBox="0 0 120 119"><g transform="translate(0,0)"><polyline points="55,74 54,109" fill="none" stroke="#cfcfcf" stroke-width="7" stroke-linecap="round" stroke-linejoin="round"/><polyline points="65,74 66,109" fill="none" stroke="#cfcfcf" stroke-width="7" stroke-linecap="round" stroke-linejoin="round"/><rect x="50" y="110" width="8" height="4" fill="#1e1e1e"/><rect x="62" y="110" width="8" height="4" fill="#1e1e1e"/><path d="M51 43 Q60 40 69 43 L70 76 L50 76 Z" fill="#d6d6d6"/><polyline points="52,46 44,36 42,20" fill="none" stroke="#d2d2d2" stroke-width="5.5" stroke-linecap="round" stroke-linejoin="round"/><polyline points="68,46 72,62 72,72" fill="none" stroke="#d2d2d2" stroke-width="5.5" stroke-linecap="round" stroke-linejoin="round"/><circle cx="42" cy="20" r="2.2" fill="#8a6050"/><circle cx="72" cy="72" r="2.2" fill="#8a6050"/><ellipse cx="60" cy="33" rx="5.5" ry="7.5" fill="#7e5a48"/><path d="M54.5 31 Q54 23 60 23 Q66 23 65.5 31 Q60 27 54.5 31Z" fill="#7a4a30"/></g><path d="M106 10 H97.5 V23.5 H111 V16" fill="none" stroke="#bdbdbd" stroke-width="1.6"/><path d="M102 19.5 L113 8.5 L116 11.5 L105 22.5 L101.5 23 Z" fill="#c8c8c8"/><rect x="7" y="99.5" width="11" height="5" fill="#8a8a8a"/><path d="M3 102 l4 -4 l4 4 l-4 4 z M14 102 l4 -4 l4 4 l-4 4 z" fill="#d0d0d0"/><path d="M12 107.5 l4 4 l-4 4 l-4 -4 z" fill="#2e2e2e" stroke="#c8c8c8" stroke-width="1.4"/></svg>
<div class="t" style="left:169px;width:600px;text-align:center;top:805.15px;font-size:14px;color:#dcdcdc;">DoctorSuit_Waving</div>
<div style="left:13px;top:824px;width:120px;height:119px;background:#474747;border-radius:2px"></div>
<svg style="position:absolute;left:13px;top:824px;" width="120" height="119" viewBox="0 0 120 119"><g transform="translate(0,0)"><polyline points="55,74 54,109" fill="none" stroke="#cfcfcf" stroke-width="7" stroke-linecap="round" stroke-linejoin="round"/><polyline points="65,74 66,109" fill="none" stroke="#cfcfcf" stroke-width="7" stroke-linecap="round" stroke-linejoin="round"/><rect x="50" y="110" width="8" height="4" fill="#1e1e1e"/><rect x="62" y="110" width="8" height="4" fill="#1e1e1e"/><path d="M51 43 Q60 40 69 43 L70 76 L50 76 Z" fill="#d6d6d6"/><polyline points="52,46 34,56 22,52" fill="none" stroke="#d2d2d2" stroke-width="5.5" stroke-linecap="round" stroke-linejoin="round"/><polyline points="68,46 84,52 96,46" fill="none" stroke="#d2d2d2" stroke-width="5.5" stroke-linecap="round" stroke-linejoin="round"/><circle cx="22" cy="52" r="2.2" fill="#8a6050"/><circle cx="96" cy="46" r="2.2" fill="#8a6050"/><ellipse cx="60" cy="33" rx="5.5" ry="7.5" fill="#7e5a48"/><path d="M54.5 31 Q54 23 60 23 Q66 23 65.5 31 Q60 27 54.5 31Z" fill="#7a4a30"/></g><path d="M106 10 H97.5 V23.5 H111 V16" fill="none" stroke="#bdbdbd" stroke-width="1.6"/><path d="M102 19.5 L113 8.5 L116 11.5 L105 22.5 L101.5 23 Z" fill="#c8c8c8"/><rect x="7" y="99.5" width="11" height="5" fill="#8a8a8a"/><path d="M3 102 l4 -4 l4 4 l-4 4 z M14 102 l4 -4 l4 4 l-4 4 z" fill="#d0d0d0"/><path d="M12 107.5 l4 4 l-4 4 l-4 -4 z" fill="#2e2e2e" stroke="#c8c8c8" stroke-width="1.4"/></svg>
<div class="t" style="left:-227px;width:600px;text-align:center;top:950.15px;font-size:14px;color:#dcdcdc;">DoctorSuit_Welco...</div>
<svg style="position:absolute;left:13px;top:244px;" width="120" height="119" viewBox="0 0 120 119"><rect x="70" y="86" width="22" height="19" rx="2" fill="#dadada"/><path d="M77 86 V83 H85 V86" fill="none" stroke="#ccc" stroke-width="1.5"/></svg>
<div style="left:594px;top:62px;width:844px;height:908px;background:#3d3d3d;border-radius:6px;"></div>
<div style="left:594px;top:62px;width:844px;height:908px;overflow:hidden;border-radius:6px"><svg width="846" height="908" style="left:0;top:0"><g stroke="#4b4b4b" stroke-width="1.3"><line x1="0" y1="-23.0" x2="846" y2="-41.6"/><line x1="0" y1="4.0" x2="846" y2="-14.7"/><line x1="0" y1="30.9" x2="846" y2="12.3"/><line x1="0" y1="57.9" x2="846" y2="39.3"/><line x1="0" y1="84.9" x2="846" y2="66.3"/><line x1="0" y1="111.9" x2="846" y2="93.3"/><line x1="0" y1="138.9" x2="846" y2="120.2"/><line x1="0" y1="165.8" x2="846" y2="147.2"/><line x1="0" y1="192.8" x2="846" y2="174.2"/><line x1="0" y1="219.8" x2="846" y2="201.2"/><line x1="0" y1="246.8" x2="846" y2="228.2"/><line x1="0" y1="273.8" x2="846" y2="255.1"/><line x1="0" y1="300.7" x2="846" y2="282.1"/><line x1="0" y1="327.7" x2="846" y2="309.1"/><line x1="0" y1="354.7" x2="846" y2="336.1"/><line x1="0" y1="381.7" x2="846" y2="363.1"/><line x1="0" y1="408.7" x2="846" y2="390.0"/><line x1="0" y1="435.6" x2="846" y2="417.0"/><line x1="0" y1="462.6" x2="846" y2="444.0"/><line x1="0" y1="489.6" x2="846" y2="471.0"/><line x1="0" y1="516.6" x2="846" y2="498.0"/><line x1="0" y1="543.6" x2="846" y2="524.9"/><line x1="0" y1="570.5" x2="846" y2="551.9"/><line x1="0" y1="597.5" x2="846" y2="578.9"/><line x1="0" y1="624.5" x2="846" y2="605.9"/><line x1="0" y1="651.5" x2="846" y2="632.9"/><line x1="0" y1="678.5" x2="846" y2="659.8"/><line x1="0" y1="705.4" x2="846" y2="686.8"/><line x1="0" y1="732.4" x2="846" y2="713.8"/><line x1="0" y1="759.4" x2="846" y2="740.8"/><line x1="0" y1="786.4" x2="846" y2="767.8"/><line x1="0" y1="813.4" x2="846" y2="794.7"/><line x1="0" y1="840.3" x2="846" y2="821.7"/><line x1="0" y1="867.3" x2="846" y2="848.7"/><line x1="0" y1="894.3" x2="846" y2="875.7"/><line x1="0" y1="921.3" x2="846" y2="902.7"/><line x1="-1253.2" y1="0" x2="-876.4" y2="908"/><line x1="-1141.2" y1="0" x2="-764.4" y2="908"/><line x1="-1029.2" y1="0" x2="-652.4" y2="908"/><line x1="-917.2" y1="0" x2="-540.4" y2="908"/><line x1="-805.2" y1="0" x2="-428.4" y2="908"/><line x1="-693.2" y1="0" x2="-316.4" y2="908"/><line x1="-581.2" y1="0" x2="-204.4" y2="908"/><line x1="-469.2" y1="0" x2="-92.4" y2="908"/><line x1="-357.2" y1="0" x2="19.6" y2="908"/><line x1="-245.2" y1="0" x2="131.6" y2="908"/><line x1="-133.2" y1="0" x2="243.6" y2="908"/><line x1="-21.2" y1="0" x2="355.6" y2="908"/><line x1="202.8" y1="0" x2="579.6" y2="908"/><line x1="314.8" y1="0" x2="691.6" y2="908"/><line x1="426.8" y1="0" x2="803.6" y2="908"/><line x1="538.8" y1="0" x2="915.6" y2="908"/><line x1="650.8" y1="0" x2="1027.6" y2="908"/><line x1="762.8" y1="0" x2="1139.6" y2="908"/><line x1="874.8" y1="0" x2="1251.6" y2="908"/><line x1="986.8" y1="0" x2="1363.6" y2="908"/><line x1="1098.8" y1="0" x2="1475.6" y2="908"/></g><line x1="90.8" y1="0" x2="467.6" y2="908" stroke="#819535" stroke-width="1.5"/><line x1="0" y1="572.5" x2="846" y2="551.4" stroke="#8f3d3d" stroke-width="1.3"/></svg></div>
<div style="left:743px;top:159px;width:20px;height:30px;background:#262626;"></div>
<div style="left:773px;top:159px;width:10px;height:19px;background:#262626;"></div>
<div style="left:793px;top:159px;width:20px;height:30px;background:#262626;"></div>
<div style="left:594px;top:62px;width:844px;height:32px;background:#2d2d2d;border-radius:6px;border-radius:6px 6px 0 0"></div>
<div style="left:594px;top:94px;width:844px;height:31px;background:rgba(46,46,46,0.82);"></div>
<div style="left:606px;top:67px;width:37px;height:23px;background:#262626;border-radius:4px;"></div>
<div style="left:651px;top:67px;width:135px;height:23px;background:#262626;border-radius:4px;"></div>
<div class="t" style="left:683px;top:71.65px;font-size:14px;color:#dcdcdc;">Pose Mode</div>
<div class="t" style="left:802px;top:71.65px;font-size:14px;color:#dcdcdc;">View</div>
<div class="t" style="left:852px;top:71.65px;font-size:14px;color:#dcdcdc;">Select</div>
<div class="t" style="left:910px;top:71.65px;font-size:14px;color:#dcdcdc;">Pose</div>
<div style="left:972px;top:67px;width:97px;height:23px;background:#262626;border-radius:4px;"></div>
<div class="t" style="left:1003px;top:71.65px;font-size:14px;color:#dcdcdc;">Normal</div>
<div style="left:1078px;top:67px;width:35px;height:23px;background:#262626;border-radius:4px;"></div>
<div style="left:1123px;top:67px;width:62px;height:23px;background:#262626;border-radius:4px;"></div>
<div style="left:1123px;top:67px;width:24px;height:23px;background:#4b4b4b;border-radius:4px;"></div>
<div style="left:1208px;top:67px;width:37px;height:23px;background:#262626;border-radius:4px;"></div>
<div style="left:1253px;top:67px;width:23px;height:23px;background:#4772b3;border-radius:4px;"></div>
<div style="left:1276px;top:67px;width:25px;height:23px;background:#262626;border-radius:4px;"></div>
<div style="left:1309px;top:67px;width:23px;height:23px;background:#4772b3;border-radius:4px;"></div>
<div style="left:1332px;top:67px;width:25px;height:23px;background:#262626;border-radius:4px;"></div>
<div style="left:1365px;top:67px;width:23px;height:23px;background:#333333;border-radius:4px;"></div>
<div style="left:1396px;top:67px;width:42px;height:23px;background:#3a3a3a;border-radius:4px;"></div>
<div style="left:1419px;top:67px;width:19px;height:23px;background:#444;"></div>
<div class="t" style="left:648px;top:104.65px;font-size:14px;color:#c8c8c8;">Orientation:</div>
<div style="left:730px;top:100px;width:122px;height:22px;background:#262626;border-radius:4px;"></div>
<div class="t" style="left:762px;top:104.65px;font-size:14px;color:#dcdcdc;">Default</div>
<div class="t" style="left:870px;top:104.65px;font-size:14px;color:#c8c8c8;">Drag:</div>
<div style="left:917px;top:100px;width:93px;height:22px;background:#262626;border-radius:4px;"></div>
<div class="t" style="left:926px;top:104.65px;font-size:14px;color:#dcdcdc;">Select Box</div>
<div style="left:1287px;top:100px;width:20px;height:22px;background:#4a4a4a;border-radius:4px;"></div>
<div class="t" style="left:1291px;top:104.65px;font-size:14px;color:#dcdcdc;">X</div>
<div style="left:1315px;top:100px;width:114px;height:22px;background:#262626;border-radius:4px;"></div>
<div class="t" style="left:1324px;top:104.65px;font-size:14px;color:#dcdcdc;">Pose Options</div>
<div style="left:604px;top:137px;width:51px;height:83px;background:#2b2b2b;border-radius:5px;"></div>
<div style="left:604px;top:178px;width:51px;height:1px;background:#3a3a3a;"></div>
<div style="left:604px;top:229px;width:51px;height:170px;background:#2b2b2b;border-radius:5px;"></div>
<div style="left:604px;top:270px;width:51px;height:1px;background:#3a3a3a;"></div>
<div style="left:604px;top:313px;width:51px;height:1px;background:#3a3a3a;"></div>
<div style="left:604px;top:357px;width:51px;height:1px;background:#3a3a3a;"></div>
<div style="left:604px;top:357px;width:51px;height:42px;background:#4772b3;border-radius:4px;"></div>
<div style="left:604px;top:407px;width:51px;height:84px;background:#2b2b2b;border-radius:5px;"></div>
<div style="left:604px;top:449px;width:51px;height:1px;background:#3a3a3a;"></div>
<div style="left:604px;top:499px;width:51px;height:41px;background:#2b2b2b;border-radius:5px;"></div>
<svg style="position:absolute;left:1020px;top:130px;" width="110" height="110" viewBox="0 0 110 110"><line x1="54" y1="58" x2="54" y2="19" stroke="#3d7fd6" stroke-width="2"/><line x1="54" y1="58" x2="93.6" y2="57" stroke="#d6455a" stroke-width="2"/><line x1="54" y1="58" x2="50" y2="48" stroke="#6a9a30" stroke-width="2"/><circle cx="14.2" cy="59.3" r="9" fill="#9a4a55" stroke="#c05060" stroke-width="1.5"/><circle cx="54.1" cy="96.8" r="9" fill="#2f5588" stroke="#3d6fb8" stroke-width="1.5"/><circle cx="57.8" cy="67.4" r="10" fill="#5a7a2a" stroke="#9ac040" stroke-width="2"/><circle cx="54" cy="19.3" r="9.5" fill="#3d7fd6"/><text x="54" y="24.5" font-size="13" text-anchor="middle" fill="#e8eef8" font-family="Liberation Sans">Z</text><circle cx="93.6" cy="57.2" r="9.5" fill="#d6455a"/><text x="93.6" y="62.2" font-size="13" text-anchor="middle" fill="#f0e0e0" font-family="Liberation Sans">X</text><circle cx="50" cy="48.3" r="9" fill="#6a9a30"/><text x="50" y="53.3" font-size="13" text-anchor="middle" fill="#e0f0d0" font-family="Liberation Sans">Y</text></svg>
<div style="left:1091px;top:240px;width:32px;height:32px;border-radius:16px;background:#2e2e2e"></div>
<div style="left:1091px;top:278px;width:32px;height:32px;border-radius:16px;background:#2e2e2e"></div>
<div style="left:1091px;top:316px;width:32px;height:32px;border-radius:16px;background:#2e2e2e"></div>
<div style="left:1091px;top:353px;width:32px;height:32px;border-radius:16px;background:#2e2e2e"></div>
<svg style="position:absolute;left:1095px;top:244px;" width="24" height="24" viewBox="0 0 24 24"><circle cx="13" cy="10" r="6" fill="none" stroke="#e0e0e0" stroke-width="2"/><line x1="9" y1="14" x2="3" y2="20" stroke="#e0e0e0" stroke-width="2.5"/><path d="M13 7 v6 M10 10 h6" stroke="#e0e0e0" stroke-width="1.5"/></svg>
<svg style="position:absolute;left:1095px;top:282px;" width="24" height="24" viewBox="0 0 24 24"><path d="M6 20 Q4 14 5 10 L7 10 L8 14 L8 5 Q10 3 11 5 L11 12 L11 3 Q13 1 14 3 L14 12 L14 4 Q16 2 17 4 L17 13 L17 7 Q19 5 20 7 L20 15 Q19 21 13 22 Z" fill="#e8e8e8"/></svg>
<svg style="position:absolute;left:1095px;top:320px;" width="24" height="24" viewBox="0 0 24 24"><circle cx="8" cy="7" r="4" fill="#e8e8e8"/><circle cx="16" cy="7" r="4" fill="#e8e8e8"/><rect x="4" y="11" width="13" height="9" rx="1" fill="#e8e8e8"/><path d="M17 14 l5 -3 v9 l-5 -3z" fill="#e8e8e8"/></svg>
<svg style="position:absolute;left:1095px;top:357px;" width="24" height="24" viewBox="0 0 24 24"><g fill="none" stroke="#e8e8e8" stroke-width="1.5"><rect x="3" y="3" width="18" height="18"/><path d="M9 3v18M15 3v18M3 9h18M3 15h18"/></g></svg>
<svg style="position:absolute;left:1107px;top:404px;" width="40" height="40" viewBox="0 0 40 40"><circle cx="20" cy="20" r="11" fill="none" stroke="#e8e8e8" stroke-width="2" stroke-dasharray="5 3"/><circle cx="20" cy="20" r="11" fill="none" stroke="#c03040" stroke-width="2" stroke-dasharray="3 5" stroke-dashoffset="-4"/><path d="M20 2v12M20 26v12M2 20h12M26 20h12" stroke="#222" stroke-width="1.5"/></svg>
<svg style="position:absolute;left:740px;top:370px;" width="360" height="310" viewBox="0 0 360 310"><path d="M886 558 L884 618 L906 620 L918 566 L930 620 L951 618 L954 558 Z" transform="translate(-740,-370)" fill="#262626"/><path d="M872 447 Q919 432 964 447 L966 510 L956 512 L955 565 L885 565 L884 505 L868 495 Z" transform="translate(-740,-370)" fill="#2a2626"/><path d="M910 440 L930 440 L920 472 Z" transform="translate(-740,-370)" fill="#d8d8e0"/><path d="M918 444 L922 444 L923 470 L920 476 L917 470 Z" transform="translate(-740,-370)" fill="#344a80"/><ellipse cx="179" cy="44" rx="15" ry="17" fill="#b98a6c"/><path d="M903 410 Q902 392 919 392 Q937 392 935 410 Q928 400 919 401 Q908 401 903 410 Z" transform="translate(-740,-370)" fill="#6e4e38"/><path d="M906 420 Q919 440 932 420 L932 428 Q919 446 906 428 Z" transform="translate(-740,-370)" fill="#7a4a30"/><path d="M897 492 Q912 490 922 505 L918 540 L906 535 L898 515 Z" transform="translate(-740,-370)" fill="#c89a80"/><path d="M947 500 L960 500 L958 525 L948 522 Z" transform="translate(-740,-370)" fill="#c8b0a0"/><g transform="translate(-740,-370)" stroke="#b02020" fill="none" stroke-width="1.5" opacity="0.85"><path d="M880 450 L900 500 L905 560 L895 600"/><path d="M958 450 L940 500 L945 560 L940 610"/><path d="M895 500 Q920 540 945 500"/><path d="M900 560 L935 600 L965 595"/><line x1="816" y1="477" x2="991" y2="464.4"/></g><g transform="translate(-740,-370)" fill="#c02020"><circle cx="816" cy="477" r="4.5"/><circle cx="991" cy="464.4" r="4.5"/><circle cx="894.7" cy="596" r="5"/><circle cx="938.8" cy="610" r="4"/><circle cx="965" cy="594" r="3"/></g><g transform="translate(-740,-370)" stroke="#d8c030" fill="none" stroke-width="1.3"><rect x="887" y="491" width="59" height="71"/><rect x="893" y="486" width="59" height="71"/><path d="M887 491 L893 486 M946 491 L952 486 M887 562 L893 557 M946 562 L952 557"/><path d="M890 515 Q919 555 948 515"/></g><g transform="translate(-740,-370)" fill="none" stroke-width="1.5"><path d="M881 445 Q900 490 919 481 Q940 490 956 445" stroke="#d8c030"/><path d="M898 440 Q919 410 942 440 Q935 470 919 465 Q903 470 898 440" stroke="#9ac030"/><path d="M905 450 Q915 430 930 452 Q925 470 910 465" stroke="#e08020"/><circle cx="928" cy="415" r="6" stroke="#60b030"/><circle cx="910" cy="415" r="5" stroke="#c03030"/></g><ellipse cx="178.89999999999998" cy="18" rx="19" ry="4.5" fill="none" stroke="#86b8c8" stroke-width="1.5"/><line x1="178" y1="170" x2="178" y2="254" stroke="#111" stroke-width="1.5" stroke-dasharray="3 2"/><g transform="translate(-740,-370)" fill="none" stroke="#8c5aa0" stroke-width="1.3" opacity="0.75"><ellipse cx="920" cy="626" rx="52" ry="18.5"/><path d="M837.5 626.3 L852 619 L851 623 L990 621 L988 617 L1000.6 624.4 L988 631 L989 627 L851 629 L852 633 Z"/></g><g transform="translate(-740,-370)" fill="none" stroke="#5a9a5a" stroke-width="1.3"><circle cx="894.7" cy="630.4" r="8"/><circle cx="944.4" cy="629.6" r="8"/></g><circle cx="179.60000000000002" cy="255.89999999999998" r="3" fill="#f0b060"/><path d="M753.1 630 L780.3 619.7 L782.2 624.4 L813.1 623.4 Q840 606 886 601.9 L888 594.4 L864.7 594 L902.2 586 L947.2 592.1 L927.5 593.4 L929.4 600 Q985 604 1021 617.8 L1052 617.8 L1051.3 613.1 L1087 621.6 L1058.8 631.9 L1057.8 628.1 L1025 629 Q995 645 951.9 650.6 L953.8 657.2 L974.4 658.1 L936 666.6 L891.9 660 L912.5 659 L906.9 651.6 Q850 647 816.9 633.4 L785 634.7 L788.8 639.7 Z" transform="translate(-740,-370)" fill="none" stroke="#d8c030" stroke-width="1.6"/></svg>
<div style="left:1150px;top:125px;width:263px;height:845px;background:rgba(61,61,61,0.7);"></div>
<div style="left:1157px;top:113px;width:181px;height:74px;background:#86782a;border-radius:5px;clip-path:inset(12px 0 0 0)"></div>
<div style="left:1157px;top:137px;width:181px;height:1px;background:#3a3410;"></div>
<div style="left:1157px;top:162px;width:181px;height:1px;background:#3a3410;"></div>
<div style="left:1150px;top:125px;width:260px;height:12px;overflow:hidden"><div class="t" style="left:26px;top:-7.35px;font-size:14px;color:#e8dfa8">X</div><div class="t" style="left:-429.5px;width:600px;text-align:right;top:-7.35px;font-size:14px;color:#e8dfa8">0.000</div></div>
<div class="t" style="left:1176px;top:142.15px;font-size:14px;color:#e8dfa8;">Y</div>
<div class="t" style="left:720.5px;width:600px;text-align:right;top:142.15px;font-size:14px;color:#e8dfa8;">0.000</div>
<div class="t" style="left:1176px;top:167.15px;font-size:14px;color:#e8dfa8;">Z</div>
<div class="t" style="left:720.5px;width:600px;text-align:right;top:167.15px;font-size:14px;color:#e8dfa8;">0.000</div>
<svg style="position:absolute;left:1361px;top:140px;" width="22" height="20" viewBox="0 0 22 20"><path d="M4 9 V6 Q4 1.5 8.5 1.5 Q12 1.5 13 5" fill="none" stroke="#b8b8b8" stroke-width="1.5"/><rect x="7" y="9" width="13" height="9" fill="none" stroke="#b8b8b8" stroke-width="1.5"/><rect x="12" y="12" width="3" height="3" fill="#b8b8b8"/></svg>
<svg style="position:absolute;left:1361px;top:165px;" width="22" height="20" viewBox="0 0 22 20"><path d="M4 9 V6 Q4 1.5 8.5 1.5 Q12 1.5 13 5" fill="none" stroke="#b8b8b8" stroke-width="1.5"/><rect x="7" y="9" width="13" height="9" fill="none" stroke="#b8b8b8" stroke-width="1.5"/><rect x="12" y="12" width="3" height="3" fill="#b8b8b8"/></svg>
<svg style="position:absolute;left:1361px;top:244px;" width="22" height="20" viewBox="0 0 22 20"><path d="M4 9 V6 Q4 1.5 8.5 1.5 Q12 1.5 13 5" fill="none" stroke="#b8b8b8" stroke-width="1.5"/><rect x="7" y="9" width="13" height="9" fill="none" stroke="#b8b8b8" stroke-width="1.5"/><rect x="12" y="12" width="3" height="3" fill="#b8b8b8"/></svg>
<svg style="position:absolute;left:1361px;top:269px;" width="22" height="20" viewBox="0 0 22 20"><path d="M4 9 V6 Q4 1.5 8.5 1.5 Q12 1.5 13 5" fill="none" stroke="#b8b8b8" stroke-width="1.5"/><rect x="7" y="9" width="13" height="9" fill="none" stroke="#b8b8b8" stroke-width="1.5"/><rect x="12" y="12" width="3" height="3" fill="#b8b8b8"/></svg>
<svg style="position:absolute;left:1361px;top:294px;" width="22" height="20" viewBox="0 0 22 20"><path d="M4 9 V6 Q4 1.5 8.5 1.5 Q12 1.5 13 5" fill="none" stroke="#b8b8b8" stroke-width="1.5"/><rect x="7" y="9" width="13" height="9" fill="none" stroke="#b8b8b8" stroke-width="1.5"/><rect x="12" y="12" width="3" height="3" fill="#b8b8b8"/></svg>
<div style="left:1157px;top:192px;width:236px;height:22px;background:#262626;border-radius:4px;"></div>
<div class="t" style="left:1166px;top:195.15px;font-size:14px;color:#dcdcdc;">Quaternion (WXYZ)</div>
<svg style="position:absolute;left:1378px;top:198px;" width="14" height="10" viewBox="0 0 14 10"><path d="M3 3 L7 7 L11 3" fill="none" stroke="#ccc" stroke-width="1.5"/></svg>
<div class="t" style="left:1157px;top:221.15px;font-size:14px;color:#c8c8c8;">Scale:</div>
<div style="left:1157px;top:243px;width:181px;height:73px;background:#86782a;border-radius:5px;"></div>
<div style="left:1157px;top:267px;width:181px;height:1px;background:#3a3410;"></div>
<div style="left:1157px;top:291px;width:181px;height:1px;background:#3a3410;"></div>
<div class="t" style="left:1176px;top:246.45px;font-size:14px;color:#e8dfa8;">X</div>
<div class="t" style="left:720.5px;width:600px;text-align:right;top:246.45px;font-size:14px;color:#e8dfa8;">1.000</div>
<div class="t" style="left:1176px;top:271.15px;font-size:14px;color:#e8dfa8;">Y</div>
<div class="t" style="left:720.5px;width:600px;text-align:right;top:271.15px;font-size:14px;color:#e8dfa8;">1.000</div>
<div class="t" style="left:1176px;top:295.65px;font-size:14px;color:#e8dfa8;">Z</div>
<div class="t" style="left:720.5px;width:600px;text-align:right;top:295.65px;font-size:14px;color:#e8dfa8;">1.000</div>
<svg style="position:absolute;left:1155px;top:341px;" width="14" height="10" viewBox="0 0 14 10"><path d="M2 2 L7 7 L12 2" fill="none" stroke="#c8c8c8" stroke-width="1.5"/></svg>
<div class="t" style="left:1173px;top:338.15px;font-size:14px;color:#e0e0e0;">Rig Bake Settings</div>
<svg style="position:absolute;left:1381px;top:343px;" width="16" height="6" viewBox="0 0 16 6"><rect x="0" y="0" width="2" height="2" fill="#8a8a8a"/><rect x="0" y="4" width="2" height="2" fill="#8a8a8a"/><rect x="4" y="0" width="2" height="2" fill="#8a8a8a"/><rect x="4" y="4" width="2" height="2" fill="#8a8a8a"/><rect x="8" y="0" width="2" height="2" fill="#8a8a8a"/><rect x="8" y="4" width="2" height="2" fill="#8a8a8a"/><rect x="12" y="0" width="2" height="2" fill="#8a8a8a"/><rect x="12" y="4" width="2" height="2" fill="#8a8a8a"/></svg>
<div style="left:1157px;top:374px;width:17px;height:17px;background:#545454;border-radius:3px;"></div>
<div class="t" style="left:1178px;top:375.15px;font-size:14px;color:#dcdcdc;">Bake All Keyed Frames</div>
<div style="left:1157px;top:402px;width:236px;height:23px;background:#353535;border-radius:4px;"></div>
<div style="left:1157px;top:402px;width:23px;height:23px;background:#404040;border-radius:4px 0 0 4px"></div>
<div style="left:1180px;top:402px;width:94px;height:23px;background:#3a3a3a;"></div>
<div style="left:1275px;top:402px;width:95px;height:23px;background:#3a3a3a;"></div>
<svg style="position:absolute;left:1158px;top:403px;" width="22" height="22" viewBox="0 0 22 22"><circle cx="11" cy="12" r="7" fill="none" stroke="#ddd" stroke-width="1.5"/><path d="M11 8 V12 H14 M9 3 H13 M16 4 L18 6" fill="none" stroke="#ddd" stroke-width="1.5"/></svg>
<div class="t" style="left:1200px;top:406.85px;font-size:14px;color:#808080;">Start</div>
<div class="t" style="left:1249px;top:406.85px;font-size:14px;color:#808080;">0</div>
<div class="t" style="left:1294px;top:406.85px;font-size:14px;color:#808080;">End</div>
<div class="t" style="left:1344px;top:406.85px;font-size:14px;color:#808080;">0</div>
<svg style="position:absolute;left:1372px;top:404px;" width="20" height="20" viewBox="0 0 20 20"><circle cx="10" cy="10" r="8.5" fill="#8a8a8a"/><path d="M11 4 L6 10 L11 16 Z" fill="#3a3a3a"/></svg>
<svg style="position:absolute;left:1155px;top:450.5px;" width="14" height="10" viewBox="0 0 14 10"><path d="M2 2 L7 7 L12 2" fill="none" stroke="#c8c8c8" stroke-width="1.5"/></svg>
<div class="t" style="left:1173px;top:447.65px;font-size:14px;color:#e0e0e0;">Rig Main Properties</div>
<svg style="position:absolute;left:1381px;top:452.5px;" width="16" height="6" viewBox="0 0 16 6"><rect x="0" y="0" width="2" height="2" fill="#8a8a8a"/><rect x="0" y="4" width="2" height="2" fill="#8a8a8a"/><rect x="4" y="0" width="2" height="2" fill="#8a8a8a"/><rect x="4" y="4" width="2" height="2" fill="#8a8a8a"/><rect x="8" y="0" width="2" height="2" fill="#8a8a8a"/><rect x="8" y="4" width="2" height="2" fill="#8a8a8a"/><rect x="12" y="0" width="2" height="2" fill="#8a8a8a"/><rect x="12" y="4" width="2" height="2" fill="#8a8a8a"/></svg>
<div style="left:1157px;top:480px;width:237px;height:23px;background:#7d7028;border-radius:5px;"></div>
<div style="left:1157px;top:480px;width:117px;height:23px;background:#9a8c48;border-radius:5px 0 0 5px"></div>
<div class="t" style="left:1176px;top:484.35px;font-size:14px;color:#e8dfb8;">Neck Follow</div>
<div class="t" style="left:777px;width:600px;text-align:right;top:484.35px;font-size:14px;color:#e8dfb8;">0.500</div>
<div style="left:1157px;top:511px;width:237px;height:23px;background:#86782a;border-radius:5px;"></div>
<div class="t" style="left:1176px;top:515.15px;font-size:14px;color:#e8dfb8;">Head Follow</div>
<div class="t" style="left:777px;width:600px;text-align:right;top:515.15px;font-size:14px;color:#e8dfb8;">0.000</div>
<svg style="position:absolute;left:1155px;top:559.5px;" width="14" height="10" viewBox="0 0 14 10"><path d="M2 2 L7 7 L12 2" fill="none" stroke="#c8c8c8" stroke-width="1.5"/></svg>
<div class="t" style="left:1173px;top:556.65px;font-size:14px;color:#e0e0e0;">Rig Layers</div>
<svg style="position:absolute;left:1381px;top:561.5px;" width="16" height="6" viewBox="0 0 16 6"><rect x="0" y="0" width="2" height="2" fill="#8a8a8a"/><rect x="0" y="4" width="2" height="2" fill="#8a8a8a"/><rect x="4" y="0" width="2" height="2" fill="#8a8a8a"/><rect x="4" y="4" width="2" height="2" fill="#8a8a8a"/><rect x="8" y="0" width="2" height="2" fill="#8a8a8a"/><rect x="8" y="4" width="2" height="2" fill="#8a8a8a"/><rect x="12" y="0" width="2" height="2" fill="#8a8a8a"/><rect x="12" y="4" width="2" height="2" fill="#8a8a8a"/></svg>
<div style="left:1157px;top:589px;width:237px;height:23px;background:#4772b3;border-radius:4px;box-shadow:0 0 0 1px rgba(35,35,35,0.55)"></div>
<div class="t" style="left:975.5px;width:600px;text-align:center;top:593.65px;font-size:14px;color:#f2f2f2;">Prop Main</div>
<div style="left:1157px;top:616px;width:237px;height:23px;background:#545454;border-radius:4px;box-shadow:0 0 0 1px rgba(35,35,35,0.55)"></div>
<div class="t" style="left:975.5px;width:600px;text-align:center;top:620.65px;font-size:14px;color:#dadada;">Props (Tweak)</div>
<div style="left:1157px;top:643px;width:112px;height:23px;background:#4772b3;border-radius:4px;box-shadow:0 0 0 1px rgba(35,35,35,0.55)"></div>
<div class="t" style="left:913.0px;width:600px;text-align:center;top:647.65px;font-size:14px;color:#f2f2f2;">Eye</div>
<div style="left:1281px;top:643px;width:113px;height:23px;background:#4772b3;border-radius:4px;box-shadow:0 0 0 1px rgba(35,35,35,0.55)"></div>
<div class="t" style="left:1037.5px;width:600px;text-align:center;top:647.65px;font-size:14px;color:#f2f2f2;">Mouth</div>
<div style="left:1157px;top:670px;width:237px;height:23px;background:#4772b3;border-radius:4px;box-shadow:0 0 0 1px rgba(35,35,35,0.55)"></div>
<div class="t" style="left:975.5px;width:600px;text-align:center;top:674.65px;font-size:14px;color:#f2f2f2;">Torso</div>
<div style="left:1157px;top:697px;width:237px;height:23px;background:#545454;border-radius:4px;box-shadow:0 0 0 1px rgba(35,35,35,0.55)"></div>
<div class="t" style="left:975.5px;width:600px;text-align:center;top:701.65px;font-size:14px;color:#dadada;">Torso (Tweak)</div>
<div style="left:1157px;top:724px;width:237px;height:23px;background:#545454;border-radius:4px;box-shadow:0 0 0 1px rgba(35,35,35,0.55)"></div>
<div class="t" style="left:975.5px;width:600px;text-align:center;top:728.65px;font-size:14px;color:#dadada;">Coat (Tweak)</div>
<div style="left:1157px;top:751px;width:237px;height:23px;background:#4772b3;border-radius:4px;box-shadow:0 0 0 1px rgba(35,35,35,0.55)"></div>
<div class="t" style="left:975.5px;width:600px;text-align:center;top:755.65px;font-size:14px;color:#f2f2f2;">Fingers</div>
<div style="left:1157px;top:778px;width:237px;height:23px;background:#545454;border-radius:4px;box-shadow:0 0 0 1px rgba(35,35,35,0.55)"></div>
<div class="t" style="left:975.5px;width:600px;text-align:center;top:782.65px;font-size:14px;color:#dadada;">Fingers (Detail)</div>
<div style="left:1157px;top:805px;width:112px;height:23px;background:#4772b3;border-radius:4px;box-shadow:0 0 0 1px rgba(35,35,35,0.55)"></div>
<div class="t" style="left:913.0px;width:600px;text-align:center;top:809.65px;font-size:14px;color:#f2f2f2;">Arm.L (IK)</div>
<div style="left:1281px;top:805px;width:113px;height:23px;background:#4772b3;border-radius:4px;box-shadow:0 0 0 1px rgba(35,35,35,0.55)"></div>
<div class="t" style="left:1037.5px;width:600px;text-align:center;top:809.65px;font-size:14px;color:#f2f2f2;">Arm.R (IK)</div>
<div style="left:1157px;top:832px;width:112px;height:23px;background:#545454;border-radius:4px;box-shadow:0 0 0 1px rgba(35,35,35,0.55)"></div>
<div class="t" style="left:913.0px;width:600px;text-align:center;top:836.65px;font-size:14px;color:#dadada;">Arm.L (FK)</div>
<div style="left:1281px;top:832px;width:113px;height:23px;background:#545454;border-radius:4px;box-shadow:0 0 0 1px rgba(35,35,35,0.55)"></div>
<div class="t" style="left:1037.5px;width:600px;text-align:center;top:836.65px;font-size:14px;color:#dadada;">Arm.R (FK)</div>
<div style="left:1157px;top:859px;width:112px;height:23px;background:#545454;border-radius:4px;box-shadow:0 0 0 1px rgba(35,35,35,0.55)"></div>
<div class="t" style="left:913.0px;width:600px;text-align:center;top:863.65px;font-size:14px;color:#dadada;">Arm.L (Tweak)</div>
<div style="left:1281px;top:859px;width:113px;height:23px;background:#545454;border-radius:4px;box-shadow:0 0 0 1px rgba(35,35,35,0.55)"></div>
<div class="t" style="left:1037.5px;width:600px;text-align:center;top:863.65px;font-size:14px;color:#dadada;">Arm.R (Tweak)</div>
<div style="left:1157px;top:886px;width:112px;height:23px;background:#4772b3;border-radius:4px;box-shadow:0 0 0 1px rgba(35,35,35,0.55)"></div>
<div class="t" style="left:913.0px;width:600px;text-align:center;top:890.65px;font-size:14px;color:#f2f2f2;">Leg.L (IK)</div>
<div style="left:1281px;top:886px;width:113px;height:23px;background:#4772b3;border-radius:4px;box-shadow:0 0 0 1px rgba(35,35,35,0.55)"></div>
<div class="t" style="left:1037.5px;width:600px;text-align:center;top:890.65px;font-size:14px;color:#f2f2f2;">Leg.R (IK)</div>
<div style="left:1157px;top:913px;width:112px;height:23px;background:#545454;border-radius:4px;box-shadow:0 0 0 1px rgba(35,35,35,0.55)"></div>
<div class="t" style="left:913.0px;width:600px;text-align:center;top:917.65px;font-size:14px;color:#dadada;">Leg.L (FK)</div>
<div style="left:1281px;top:913px;width:113px;height:23px;background:#545454;border-radius:4px;box-shadow:0 0 0 1px rgba(35,35,35,0.55)"></div>
<div class="t" style="left:1037.5px;width:600px;text-align:center;top:917.65px;font-size:14px;color:#dadada;">Leg.R (FK)</div>
<div style="left:1157px;top:940px;width:112px;height:23px;background:#545454;border-radius:4px;box-shadow:0 0 0 1px rgba(35,35,35,0.55)"></div>
<div class="t" style="left:913.0px;width:600px;text-align:center;top:944.65px;font-size:14px;color:#dadada;">Leg.L (Tweak)</div>
<div style="left:1281px;top:940px;width:113px;height:23px;background:#545454;border-radius:4px;box-shadow:0 0 0 1px rgba(35,35,35,0.55)"></div>
<div class="t" style="left:1037.5px;width:600px;text-align:center;top:944.65px;font-size:14px;color:#dadada;">Leg.R (Tweak)</div>
<div style="left:1413px;top:125px;width:25px;height:845px;background:#1e1e1e;border-radius:0 0 6px 0"></div>
<div style="left:1414px;top:131px;width:22px;height:52px;background:#3a3a3a;border-radius:4px;border-radius:0 4px 4px 0"></div>
<div class="t" style="left:1275px;top:150.0px;width:300px;text-align:center;font-size:13px;color:#d4d4d4;transform:rotate(-90deg)">Item</div>
<div style="left:1414px;top:187px;width:22px;height:48px;background:#2c2c2c;border-radius:4px;border-radius:0 4px 4px 0"></div>
<div class="t" style="left:1275px;top:204.0px;width:300px;text-align:center;font-size:13px;color:#d4d4d4;transform:rotate(-90deg)">Tool</div>
<div style="left:1414px;top:239px;width:22px;height:52px;background:#2c2c2c;border-radius:4px;border-radius:0 4px 4px 0"></div>
<div class="t" style="left:1275px;top:258.0px;width:300px;text-align:center;font-size:13px;color:#d4d4d4;transform:rotate(-90deg)">View</div>
<div style="left:1414px;top:294px;width:22px;height:87px;background:#2c2c2c;border-radius:4px;border-radius:0 4px 4px 0"></div>
<div class="t" style="left:1275px;top:330.5px;width:300px;text-align:center;font-size:13px;color:#d4d4d4;transform:rotate(-90deg)">Animation</div>
<div style="left:1414px;top:385px;width:22px;height:104px;background:#2c2c2c;border-radius:4px;border-radius:0 4px 4px 0"></div>
<div class="t" style="left:1275px;top:430.0px;width:300px;text-align:center;font-size:13px;color:#d4d4d4;transform:rotate(-90deg)">Shortcut VUr</div>
<div style="left:1441px;top:62px;width:476px;height:322px;background:#2a2a2a;border-radius:6px;"></div>
<div style="left:1543px;top:93px;width:291px;height:275px;background:radial-gradient(ellipse at 50% 45%, #383838 0%, #343434 55%, #303030 100%);border:1px dashed #0c0c0c"></div>
<div style="left:1441px;top:62px;width:476px;height:32px;background:#2d2d2d;border-radius:6px;border-radius:6px 6px 0 0"></div>
<div style="left:1446px;top:67px;width:16px;height:23px;background:#262626;border-radius:4px;"></div>
<div style="left:1471px;top:67px;width:37px;height:23px;background:#262626;border-radius:4px;"></div>
<div style="left:1516px;top:67px;width:63px;height:23px;background:#262626;border-radius:4px;"></div>
<div style="left:1516px;top:67px;width:22px;height:23px;background:#4b4b4b;border-radius:4px;"></div>
<div style="left:1600px;top:67px;width:37px;height:23px;background:#262626;border-radius:4px;"></div>
<div style="left:1646px;top:67px;width:23px;height:23px;background:#4772b3;border-radius:4px;"></div>
<div style="left:1669px;top:67px;width:24px;height:23px;background:#262626;border-radius:4px;"></div>
<div style="left:1702px;top:67px;width:23px;height:23px;background:#4772b3;border-radius:4px;"></div>
<div style="left:1725px;top:67px;width:25px;height:23px;background:#262626;border-radius:4px;"></div>
<div style="left:1758px;top:67px;width:23px;height:23px;background:#333333;border-radius:4px;"></div>
<div style="left:1789px;top:67px;width:95px;height:23px;background:#3d3d3d;border-radius:4px;"></div>
<div style="left:1837px;top:67px;width:23px;height:23px;background:#4772b3;border-radius:4px;"></div>
<div style="left:1886px;top:67px;width:22px;height:23px;background:#262626;border-radius:4px;"></div>
<svg style="position:absolute;left:0px;top:0px;pointer-events:none" width="1920" height="400" viewBox="0 0 1920 400"><path d="M1664 335 L1658 352 L1676 354 L1680 338 Z M1700 335 L1700 354 L1718 352 L1714 335 Z" fill="#161616"/><path d="M1663 258 L1712 258 L1716 338 L1700 340 L1690 275 L1682 340 L1660 338 Z" fill="#1b1b1b"/><path d="M1668 180 Q1652 185 1648 198 Q1644 215 1650 232 L1664 240 L1664 262 L1712 262 L1712 245 L1720 246 Q1726 215 1722 198 Q1718 185 1704 180 Z" fill="#1e1e1e"/><path d="M1678 179 L1694 179 L1688 205 Z" fill="#d0d0d8"/><path d="M1685 182 L1689 182 L1690 200 L1686 205 L1684 200 Z" fill="#3a4a70"/><ellipse cx="1687.5" cy="160" rx="14" ry="17" fill="#c49a7a"/><path d="M1673 155 Q1671 136 1688 136 Q1704 136 1702 155 Q1695 146 1688 147 Q1680 147 1673 155Z" fill="#7a5a45"/><path d="M1675 166 Q1688 186 1700 166 L1700 172 Q1688 192 1675 172Z" fill="#8a5a3a"/><path d="M1677 156 h8 v5 h-8z M1690 156 h8 v5 h-8z" fill="none" stroke="#222" stroke-width="1.2"/><path d="M1666 232 Q1678 230 1686 242 L1685 254 L1676 250 L1668 240 Z" fill="#dcc0a8"/><path d="M1712 242 L1720 244 L1718 268 L1712 258 Z" fill="#c8a890"/></svg>
<div style="left:1441px;top:387px;width:476px;height:195px;background:#282828;border-radius:6px;"></div>
<div style="left:1441px;top:387px;width:476px;height:34px;background:#2b2b2b;border-radius:6px;border-radius:6px 6px 0 0"></div>
<div style="left:1452px;top:391px;width:38px;height:24px;background:#232323;border-radius:4px;"></div>
<div style="left:1497px;top:391px;width:39px;height:24px;background:#232323;border-radius:4px;"></div>
<div style="left:1596px;top:391px;width:142px;height:24px;background:#1a1a1a;border-radius:4px;"></div>
<div style="left:1839px;top:391px;width:39px;height:24px;background:#232323;border-radius:4px;"></div>
<div style="left:1885px;top:391px;width:23px;height:24px;background:#4a4a4a;border-radius:4px;"></div>
<div style="left:1467px;top:421px;width:24px;height:21px;background:#3d3d3d;border-radius:5px;"></div>
<div class="t" style="left:1497px;top:426.90px;font-size:14px;color:#dcdcdc;">Scene Collection</div>
<svg style="position:absolute;left:1471px;top:423px;" width="18" height="17" viewBox="0 0 18 17"><rect x="1" y="1" width="16" height="4" fill="#e0e0e0"/><rect x="1" y="7" width="16" height="9" fill="#e0e0e0"/><rect x="7" y="9" width="4" height="2" fill="#282828"/></svg>
<svg style="position:absolute;left:1496px;top:448.5px;" width="18" height="17" viewBox="0 0 18 17"><rect x="1" y="1" width="16" height="4" fill="#9a9a9a"/><rect x="1" y="7" width="16" height="9" fill="#9a9a9a"/><rect x="7" y="9" width="4" height="2" fill="#282828"/></svg>
<div class="t" style="left:1522px;top:450.65px;font-size:14px;color:#8c8c8c;">set</div>
<svg style="position:absolute;left:1789px;top:448.5px;" width="16" height="16" viewBox="0 0 16 16"><rect x="2.5" y="2.5" width="11" height="11" fill="none" stroke="#9a9a9a" stroke-width="1.5" rx="1"/></svg>
<svg style="position:absolute;left:1814px;top:448.5px;" width="18" height="18" viewBox="0 0 18 18"><path d="M3 2 L16 7 L10 9 L8 15 Z" fill="none" stroke="#777" stroke-width="1"/></svg>
<svg style="position:absolute;left:1838px;top:449.5px;" width="18" height="14" viewBox="0 0 18 14"><path d="M1 7 Q9 -1 17 7 Q9 15 1 7Z" fill="none" stroke="#c8c8c8" stroke-width="1.5"/><circle cx="9" cy="7" r="2.5" fill="#c8c8c8"/></svg>
<svg style="position:absolute;left:1863px;top:448.5px;" width="18" height="17" viewBox="0 0 18 17"><rect x="1.5" y="1.5" width="15" height="10" fill="none" stroke="#aaaaaa" stroke-width="1.5"/><rect x="3.5" y="3.5" width="11" height="6" fill="#aaaaaa" opacity="0.6"/><path d="M9 12 V15 M5 15.5 H13" stroke="#aaaaaa" stroke-width="1.5"/></svg>
<svg style="position:absolute;left:1888px;top:448.5px;" width="18" height="17" viewBox="0 0 18 17"><rect x="1" y="3" width="16" height="12" rx="2" fill="#aaaaaa"/><circle cx="9" cy="9" r="4" fill="#282828"/><circle cx="9" cy="9" r="2.2" fill="#aaaaaa"/><rect x="5" y="1" width="6" height="3" fill="#aaaaaa"/></svg>
<div style="left:1444px;top:470.5px;width:470px;height:25px;background:#2b2b2b;"></div>
<svg style="position:absolute;left:1496px;top:473.5px;" width="18" height="17" viewBox="0 0 18 17"><rect x="1" y="1" width="16" height="4" fill="#9a9a9a"/><rect x="1" y="7" width="16" height="9" fill="#9a9a9a"/><rect x="7" y="9" width="4" height="2" fill="#282828"/></svg>
<div class="t" style="left:1522px;top:475.65px;font-size:14px;color:#8c8c8c;">Widget</div>
<svg style="position:absolute;left:1789px;top:473.5px;" width="16" height="16" viewBox="0 0 16 16"><rect x="2.5" y="2.5" width="11" height="11" fill="none" stroke="#9a9a9a" stroke-width="1.5" rx="1"/></svg>
<svg style="position:absolute;left:1814px;top:473.5px;" width="18" height="18" viewBox="0 0 18 18"><path d="M3 2 L16 7 L10 9 L8 15 Z" fill="#777" stroke="#777" stroke-width="1"/></svg>
<svg style="position:absolute;left:1838px;top:474.5px;" width="18" height="14" viewBox="0 0 18 14"><path d="M1 7 Q9 -1 17 7 Q9 15 1 7Z" fill="none" stroke="#c8c8c8" stroke-width="1.5"/><circle cx="9" cy="7" r="2.5" fill="#c8c8c8"/></svg>
<svg style="position:absolute;left:1863px;top:473.5px;" width="18" height="17" viewBox="0 0 18 17"><rect x="1.5" y="1.5" width="15" height="10" fill="none" stroke="#aaaaaa" stroke-width="1.5"/><rect x="3.5" y="3.5" width="11" height="6" fill="#aaaaaa" opacity="0.6"/><path d="M9 12 V15 M5 15.5 H13" stroke="#aaaaaa" stroke-width="1.5"/></svg>
<svg style="position:absolute;left:1888px;top:473.5px;" width="18" height="17" viewBox="0 0 18 17"><rect x="1" y="3" width="16" height="12" rx="2" fill="#aaaaaa"/><circle cx="9" cy="9" r="4" fill="#282828"/><circle cx="9" cy="9" r="2.2" fill="#aaaaaa"/><rect x="5" y="1" width="6" height="3" fill="#aaaaaa"/></svg>
<svg style="position:absolute;left:1496px;top:498.5px;" width="18" height="17" viewBox="0 0 18 17"><rect x="1" y="1" width="16" height="4" fill="#9a9a9a"/><rect x="1" y="7" width="16" height="9" fill="#9a9a9a"/><rect x="7" y="9" width="4" height="2" fill="#282828"/></svg>
<div class="t" style="left:1522px;top:500.65px;font-size:14px;color:#8c8c8c;">WGTS_rig</div>
<svg style="position:absolute;left:1789px;top:498.5px;" width="16" height="16" viewBox="0 0 16 16"><rect x="2.5" y="2.5" width="11" height="11" fill="none" stroke="#9a9a9a" stroke-width="1.5" rx="1"/></svg>
<svg style="position:absolute;left:1814px;top:498.5px;" width="18" height="18" viewBox="0 0 18 18"><path d="M3 2 L16 7 L10 9 L8 15 Z" fill="#777" stroke="#777" stroke-width="1"/></svg>
<svg style="position:absolute;left:1838px;top:499.5px;" width="18" height="14" viewBox="0 0 18 14"><path d="M1 7 Q9 -1 17 7 Q9 15 1 7Z" fill="none" stroke="#c8c8c8" stroke-width="1.5"/><circle cx="9" cy="7" r="2.5" fill="#c8c8c8"/></svg>
<svg style="position:absolute;left:1863px;top:498.5px;" width="18" height="17" viewBox="0 0 18 17"><rect x="1.5" y="1.5" width="15" height="10" fill="none" stroke="#aaaaaa" stroke-width="1.5"/><rect x="3.5" y="3.5" width="11" height="6" fill="none" opacity="0.6"/><path d="M9 12 V15 M5 15.5 H13" stroke="#aaaaaa" stroke-width="1.5"/></svg>
<svg style="position:absolute;left:1888px;top:498.5px;" width="18" height="17" viewBox="0 0 18 17"><rect x="1" y="3" width="16" height="12" rx="2" fill="#aaaaaa"/><circle cx="9" cy="9" r="4" fill="#282828"/><circle cx="9" cy="9" r="2.2" fill="#aaaaaa"/><rect x="5" y="1" width="6" height="3" fill="#aaaaaa"/></svg>
<div style="left:1444px;top:520.5px;width:470px;height:25px;background:#2b2b2b;"></div>
<svg style="position:absolute;left:1496px;top:523.5px;" width="18" height="17" viewBox="0 0 18 17"><rect x="1" y="1" width="16" height="4" fill="#9a9a9a"/><rect x="1" y="7" width="16" height="9" fill="#9a9a9a"/><rect x="7" y="9" width="4" height="2" fill="#282828"/></svg>
<div class="t" style="left:1522px;top:525.65px;font-size:14px;color:#8c8c8c;">METARIG</div>
<svg style="position:absolute;left:1789px;top:523.5px;" width="16" height="16" viewBox="0 0 16 16"><rect x="2.5" y="2.5" width="11" height="11" fill="none" stroke="#9a9a9a" stroke-width="1.5" rx="1"/></svg>
<svg style="position:absolute;left:1814px;top:523.5px;" width="18" height="18" viewBox="0 0 18 18"><path d="M3 2 L16 7 L10 9 L8 15 Z" fill="#777" stroke="#777" stroke-width="1"/></svg>
<svg style="position:absolute;left:1838px;top:524.5px;" width="18" height="14" viewBox="0 0 18 14"><path d="M1 7 Q9 -1 17 7 Q9 15 1 7Z" fill="none" stroke="#c8c8c8" stroke-width="1.5"/><circle cx="9" cy="7" r="2.5" fill="#c8c8c8"/></svg>
<svg style="position:absolute;left:1863px;top:523.5px;" width="18" height="17" viewBox="0 0 18 17"><rect x="1.5" y="1.5" width="15" height="10" fill="none" stroke="#aaaaaa" stroke-width="1.5"/><rect x="3.5" y="3.5" width="11" height="6" fill="#aaaaaa" opacity="0.6"/><path d="M9 12 V15 M5 15.5 H13" stroke="#aaaaaa" stroke-width="1.5"/></svg>
<svg style="position:absolute;left:1888px;top:523.5px;" width="18" height="17" viewBox="0 0 18 17"><rect x="1" y="3" width="16" height="12" rx="2" fill="#aaaaaa"/><circle cx="9" cy="9" r="4" fill="#282828"/><circle cx="9" cy="9" r="2.2" fill="#aaaaaa"/><rect x="5" y="1" width="6" height="3" fill="#aaaaaa"/></svg>
<svg style="position:absolute;left:1496px;top:548.5px;" width="18" height="17" viewBox="0 0 18 17"><rect x="1" y="1" width="16" height="4" fill="#e0e0e0"/><rect x="1" y="7" width="16" height="9" fill="#e0e0e0"/><rect x="7" y="9" width="4" height="2" fill="#282828"/></svg>
<div class="t" style="left:1522px;top:550.65px;font-size:14px;color:#d8d8d8;">Business Man.001</div>
<svg style="position:absolute;left:1789px;top:548.5px;" width="16" height="16" viewBox="0 0 16 16"><rect x="2.5" y="2.5" width="11" height="11" fill="#e8e8e8" stroke="#e8e8e8" stroke-width="1.5" rx="1"/><path d="M4.5 8 L7 10.5 L11.5 5" fill="none" stroke="#222" stroke-width="1.8"/></svg>
<svg style="position:absolute;left:1814px;top:548.5px;" width="18" height="18" viewBox="0 0 18 18"><path d="M3 2 L16 7 L10 9 L8 15 Z" fill="#e8e8e8" stroke="#e8e8e8" stroke-width="1"/></svg>
<svg style="position:absolute;left:1838px;top:549.5px;" width="18" height="14" viewBox="0 0 18 14"><path d="M1 7 Q9 -1 17 7 Q9 15 1 7Z" fill="none" stroke="#c8c8c8" stroke-width="1.5"/><circle cx="9" cy="7" r="2.5" fill="#c8c8c8"/></svg>
<svg style="position:absolute;left:1863px;top:548.5px;" width="18" height="17" viewBox="0 0 18 17"><rect x="1.5" y="1.5" width="15" height="10" fill="none" stroke="#e8e8e8" stroke-width="1.5"/><rect x="3.5" y="3.5" width="11" height="6" fill="#e8e8e8" opacity="0.6"/><path d="M9 12 V15 M5 15.5 H13" stroke="#e8e8e8" stroke-width="1.5"/></svg>
<svg style="position:absolute;left:1888px;top:548.5px;" width="18" height="17" viewBox="0 0 18 17"><rect x="1" y="3" width="16" height="12" rx="2" fill="#e8e8e8"/><circle cx="9" cy="9" r="4" fill="#282828"/><circle cx="9" cy="9" r="2.2" fill="#e8e8e8"/><rect x="5" y="1" width="6" height="3" fill="#e8e8e8"/></svg>
<svg style="position:absolute;left:1472px;top:550px;" width="14" height="14" viewBox="0 0 14 14"><path d="M3 2 L11 7 L3 12 Z" fill="#c8c8c8"/></svg>
<svg style="position:absolute;left:1666px;top:547px;" width="22" height="20" viewBox="0 0 22 20"><path d="M2 3 L18 3 L10 17 Z" fill="none" stroke="#e0902a" stroke-width="3.5"/></svg>
<div style="left:1690px;top:546px;width:22px;height:22px;background:#5a5a5a;border-radius:5px;"></div>
<svg style="position:absolute;left:1690px;top:546px;" width="22" height="22" viewBox="0 0 22 22"><path d="M11 3 V9 M4 8 H18 M11 9 L5 19 M11 9 L17 19" stroke="#e0902a" stroke-width="3" fill="none"/></svg>
<div class="t" style="left:1676px;top:555.84px;font-size:12px;color:#e8e8e8;">31</div>
<svg style="position:absolute;left:1716px;top:547px;" width="18" height="17" viewBox="0 0 18 17"><rect x="1" y="1" width="16" height="4" fill="#e0e0e0"/><rect x="1" y="7" width="16" height="9" fill="#e0e0e0"/><rect x="7" y="9" width="4" height="2" fill="#282828"/></svg>
<div class="t" style="left:1729px;top:555.84px;font-size:12px;color:#e8e8e8;">99</div>
<div style="left:1441px;top:585px;width:476px;height:418px;background:#303030;border-radius:6px;"></div>
<div style="left:1441px;top:585px;width:476px;height:33px;background:#2b2b2b;border-radius:6px;border-radius:6px 6px 0 0"></div>
<div style="left:1454px;top:591px;width:36px;height:23px;background:#232323;border-radius:4px;"></div>
<div style="left:1611px;top:591px;width:142px;height:23px;background:#1a1a1a;border-radius:4px;"></div>
<div style="left:1885px;top:591px;width:23px;height:23px;background:#232323;border-radius:4px;"></div>
<div style="left:1441px;top:618px;width:36px;height:385px;background:#1e1e1e;border-radius:0 0 0 6px"></div>
<div style="left:1444px;top:672px;width:33px;height:34px;background:#303030;border-radius:5px;border-radius:5px 0 0 5px"></div>
<div style="left:1446px;top:618px;width:31px;height:54px;background:#232323;"></div>
<svg style="position:absolute;left:1448px;top:634px;" width="24" height="22" viewBox="0 0 24 22"><path d="M6 3 V12 M4 12 h5 v7 h-5z" stroke="#ddd" fill="#ddd" stroke-width="1.5"/><path d="M14 3 v5 h6 v-5 M17 8 v11" stroke="#ddd" fill="none" stroke-width="2.5"/></svg>
<svg style="position:absolute;left:1448px;top:678px;" width="24" height="22" viewBox="0 0 24 22"><rect x="3" y="6" width="18" height="13" fill="none" stroke="#ddd" stroke-width="2"/><rect x="6" y="2" width="5" height="4" fill="#ddd"/><rect x="14" y="2" width="5" height="4" fill="#ddd"/><rect x="16" y="9" width="3" height="3" fill="#ddd"/></svg>
<svg style="position:absolute;left:1448px;top:712px;" width="24" height="22" viewBox="0 0 24 22"><rect x="2" y="3" width="20" height="5" fill="#ccc"/><rect x="5" y="10" width="14" height="10" fill="none" stroke="#ccc" stroke-width="2"/><path d="M8 18 l4 -5 l4 5z" fill="#ccc"/></svg>
<svg style="position:absolute;left:1448px;top:747px;" width="24" height="22" viewBox="0 0 24 22"><rect x="7" y="3" width="14" height="13" fill="none" stroke="#ccc" stroke-width="1.8"/><path d="M4 6 v13 h14" fill="none" stroke="#ccc" stroke-width="1.5"/><path d="M9 14 l4 -6 l4 6z" fill="#ccc"/></svg>
<svg style="position:absolute;left:1448px;top:782px;" width="24" height="22" viewBox="0 0 24 22"><path d="M8 2 L3 12 Q3 17 8 17 Q13 17 13 12 Z" fill="#ccc"/><circle cx="15" cy="14" r="5" fill="none" stroke="#ccc" stroke-width="1.8"/><circle cx="18" cy="5" r="3" fill="#ccc"/></svg>
<svg style="position:absolute;left:1448px;top:818px;" width="24" height="22" viewBox="0 0 24 22"><circle cx="11" cy="11" r="8" fill="#a03050"/><path d="M5 8 Q10 6 12 10 Q14 14 10 17" fill="none" stroke="#e07080" stroke-width="2"/></svg>
<svg style="position:absolute;left:1448px;top:863px;" width="24" height="22" viewBox="0 0 24 22"><rect x="5" y="5" width="12" height="12" fill="#e0a060"/><path d="M2 6 V2 H6 M16 2 H20 V6 M20 16 V20 H16 M6 20 H2 V16" fill="none" stroke="#c08040" stroke-width="1.2"/></svg>
<svg style="position:absolute;left:1448px;top:898px;" width="24" height="22" viewBox="0 0 24 22"><circle cx="10" cy="12" r="8" fill="none" stroke="#5a7ab8" stroke-width="2"/><circle cx="10" cy="12" r="4" fill="#8aaae0"/><circle cx="18" cy="4" r="2.5" fill="#aaa"/></svg>
<svg style="position:absolute;left:1448px;top:932px;" width="24" height="22" viewBox="0 0 24 22"><path d="M4 16 Q2 8 10 5 L19 2 L17 10 Q14 18 6 18Z" fill="none" stroke="#5a7ab8" stroke-width="2.2"/><circle cx="9" cy="13" r="3.5" fill="#8aaae0"/></svg>
<svg style="position:absolute;left:1448px;top:968px;" width="24" height="22" viewBox="0 0 24 22"><circle cx="13" cy="4" r="2.5" fill="#40a070"/><path d="M4 5 L10 9 L16 8 L20 12 M10 9 L8 15 L3 19 M8 15 L14 16 L16 21" fill="none" stroke="#40a070" stroke-width="2"/></svg>
<div style="left:1487px;top:618px;width:423px;height:117px;background:#3a3a3a;border-radius:0 0 6px 6px"></div>
<div class="t" style="left:1052.5px;width:600px;text-align:right;top:618.15px;font-size:14px;color:#dcdcdc;">Samples</div>
<div class="t" style="left:1052.5px;width:600px;text-align:right;top:642.65px;font-size:14px;color:#dcdcdc;">Time Limit</div>
<div style="left:1665px;top:617px;width:234px;height:20px;background:#545454;"></div>
<div class="t" style="left:1481px;width:600px;text-align:center;top:618.15px;font-size:14px;color:#e6e6e6;">128</div>
<div style="left:1665px;top:639px;width:234px;height:22px;background:#545454;border-radius:4px;border-radius:0 0 4px 4px"></div>
<div class="t" style="left:1481px;width:600px;text-align:center;top:642.65px;font-size:14px;color:#e6e6e6;">0 sec</div>
<div style="left:1487px;top:672px;width:423px;height:1px;background:#363636;"></div>
<div style="left:1487px;top:706px;width:423px;height:29px;background:#3c3c3c;border-radius:0 0 6px 6px"></div>
<svg style="position:absolute;left:1516px;top:683px;" width="10" height="14" viewBox="0 0 10 14"><path d="M2 2 L7 7 L2 12" fill="none" stroke="#c8c8c8" stroke-width="1.5"/></svg>
<div style="left:1530px;top:681px;width:17px;height:17px;background:#4772b3;border-radius:3px;"></div>
<svg style="position:absolute;left:1530px;top:681px;" width="17" height="17" viewBox="0 0 17 17"><path d="M3.5 8.5 L7 12 L13.5 4.5" fill="none" stroke="#fff" stroke-width="2"/></svg>
<div class="t" style="left:1550px;top:682.65px;font-size:14px;color:#e0e0e0;">Denoise</div>
<svg style="position:absolute;left:1516px;top:713px;" width="10" height="14" viewBox="0 0 10 14"><path d="M2 2 L7 7 L2 12" fill="none" stroke="#c8c8c8" stroke-width="1.5"/></svg>
<div class="t" style="left:1531px;top:713.15px;font-size:14px;color:#e0e0e0;">Advanced</div>
<div style="left:1487px;top:737.5px;width:423px;height:30px;background:#3d3d3d;border-radius:6px;"></div>
<svg style="position:absolute;left:1499px;top:746.5px;" width="10" height="14" viewBox="0 0 10 14"><path d="M2 2 L7 7 L2 12" fill="none" stroke="#c8c8c8" stroke-width="1.5"/></svg>
<div class="t" style="left:1514px;top:745.65px;font-size:14px;color:#e0e0e0;">Light Paths</div>
<svg style="position:absolute;left:1887px;top:750.5px;" width="16" height="6" viewBox="0 0 16 6"><rect x="0" y="0" width="2" height="2" fill="#8a8a8a"/><rect x="0" y="4" width="2" height="2" fill="#8a8a8a"/><rect x="4" y="0" width="2" height="2" fill="#8a8a8a"/><rect x="4" y="4" width="2" height="2" fill="#8a8a8a"/><rect x="8" y="0" width="2" height="2" fill="#8a8a8a"/><rect x="8" y="4" width="2" height="2" fill="#8a8a8a"/><rect x="12" y="0" width="2" height="2" fill="#8a8a8a"/><rect x="12" y="4" width="2" height="2" fill="#8a8a8a"/></svg>
<div style="left:1487px;top:770.5px;width:423px;height:30px;background:#3d3d3d;border-radius:6px;"></div>
<svg style="position:absolute;left:1499px;top:779.5px;" width="10" height="14" viewBox="0 0 10 14"><path d="M2 2 L7 7 L2 12" fill="none" stroke="#c8c8c8" stroke-width="1.5"/></svg>
<div class="t" style="left:1514px;top:778.65px;font-size:14px;color:#e0e0e0;">Volumes</div>
<svg style="position:absolute;left:1887px;top:783.5px;" width="16" height="6" viewBox="0 0 16 6"><rect x="0" y="0" width="2" height="2" fill="#8a8a8a"/><rect x="0" y="4" width="2" height="2" fill="#8a8a8a"/><rect x="4" y="0" width="2" height="2" fill="#8a8a8a"/><rect x="4" y="4" width="2" height="2" fill="#8a8a8a"/><rect x="8" y="0" width="2" height="2" fill="#8a8a8a"/><rect x="8" y="4" width="2" height="2" fill="#8a8a8a"/><rect x="12" y="0" width="2" height="2" fill="#8a8a8a"/><rect x="12" y="4" width="2" height="2" fill="#8a8a8a"/></svg>
<div style="left:1487px;top:803.5px;width:423px;height:30px;background:#3d3d3d;border-radius:6px;"></div>
<svg style="position:absolute;left:1499px;top:812.5px;" width="10" height="14" viewBox="0 0 10 14"><path d="M2 2 L7 7 L2 12" fill="none" stroke="#c8c8c8" stroke-width="1.5"/></svg>
<div class="t" style="left:1514px;top:811.65px;font-size:14px;color:#e0e0e0;">Curves</div>
<svg style="position:absolute;left:1887px;top:816.5px;" width="16" height="6" viewBox="0 0 16 6"><rect x="0" y="0" width="2" height="2" fill="#8a8a8a"/><rect x="0" y="4" width="2" height="2" fill="#8a8a8a"/><rect x="4" y="0" width="2" height="2" fill="#8a8a8a"/><rect x="4" y="4" width="2" height="2" fill="#8a8a8a"/><rect x="8" y="0" width="2" height="2" fill="#8a8a8a"/><rect x="8" y="4" width="2" height="2" fill="#8a8a8a"/><rect x="12" y="0" width="2" height="2" fill="#8a8a8a"/><rect x="12" y="4" width="2" height="2" fill="#8a8a8a"/></svg>
<div style="left:1487px;top:836.5px;width:423px;height:30px;background:#3d3d3d;border-radius:6px;"></div>
<svg style="position:absolute;left:1499px;top:845.5px;" width="10" height="14" viewBox="0 0 10 14"><path d="M2 2 L7 7 L2 12" fill="none" stroke="#c8c8c8" stroke-width="1.5"/></svg>
<div style="left:1513px;top:843.5px;width:17px;height:17px;background:#4772b3;border-radius:3px;"></div>
<svg style="position:absolute;left:1513px;top:843.5px;" width="17" height="17" viewBox="0 0 17 17"><path d="M3.5 8.5 L7 12 L13.5 4.5" fill="none" stroke="#fff" stroke-width="2"/></svg>
<div class="t" style="left:1533px;top:844.65px;font-size:14px;color:#e0e0e0;">Simplify</div>
<svg style="position:absolute;left:1887px;top:849.5px;" width="16" height="6" viewBox="0 0 16 6"><rect x="0" y="0" width="2" height="2" fill="#8a8a8a"/><rect x="0" y="4" width="2" height="2" fill="#8a8a8a"/><rect x="4" y="0" width="2" height="2" fill="#8a8a8a"/><rect x="4" y="4" width="2" height="2" fill="#8a8a8a"/><rect x="8" y="0" width="2" height="2" fill="#8a8a8a"/><rect x="8" y="4" width="2" height="2" fill="#8a8a8a"/><rect x="12" y="0" width="2" height="2" fill="#8a8a8a"/><rect x="12" y="4" width="2" height="2" fill="#8a8a8a"/></svg>
<div style="left:1487px;top:869.5px;width:423px;height:30px;background:#3d3d3d;border-radius:6px;"></div>
<svg style="position:absolute;left:1499px;top:878.5px;" width="10" height="14" viewBox="0 0 10 14"><path d="M2 2 L7 7 L2 12" fill="none" stroke="#c8c8c8" stroke-width="1.5"/></svg>
<div style="left:1513px;top:876.5px;width:17px;height:17px;background:#545454;border-radius:3px;"></div>
<div class="t" style="left:1533px;top:877.65px;font-size:14px;color:#e0e0e0;">Motion Blur</div>
<svg style="position:absolute;left:1887px;top:882.5px;" width="16" height="6" viewBox="0 0 16 6"><rect x="0" y="0" width="2" height="2" fill="#8a8a8a"/><rect x="0" y="4" width="2" height="2" fill="#8a8a8a"/><rect x="4" y="0" width="2" height="2" fill="#8a8a8a"/><rect x="4" y="4" width="2" height="2" fill="#8a8a8a"/><rect x="8" y="0" width="2" height="2" fill="#8a8a8a"/><rect x="8" y="4" width="2" height="2" fill="#8a8a8a"/><rect x="12" y="0" width="2" height="2" fill="#8a8a8a"/><rect x="12" y="4" width="2" height="2" fill="#8a8a8a"/></svg>
<div style="left:1487px;top:902.5px;width:423px;height:30px;background:#3d3d3d;border-radius:6px;"></div>
<svg style="position:absolute;left:1499px;top:911.5px;" width="10" height="14" viewBox="0 0 10 14"><path d="M2 2 L7 7 L2 12" fill="none" stroke="#c8c8c8" stroke-width="1.5"/></svg>
<div class="t" style="left:1514px;top:910.65px;font-size:14px;color:#e0e0e0;">Film</div>
<svg style="position:absolute;left:1887px;top:915.5px;" width="16" height="6" viewBox="0 0 16 6"><rect x="0" y="0" width="2" height="2" fill="#8a8a8a"/><rect x="0" y="4" width="2" height="2" fill="#8a8a8a"/><rect x="4" y="0" width="2" height="2" fill="#8a8a8a"/><rect x="4" y="4" width="2" height="2" fill="#8a8a8a"/><rect x="8" y="0" width="2" height="2" fill="#8a8a8a"/><rect x="8" y="4" width="2" height="2" fill="#8a8a8a"/><rect x="12" y="0" width="2" height="2" fill="#8a8a8a"/><rect x="12" y="4" width="2" height="2" fill="#8a8a8a"/></svg>
<div style="left:1487px;top:935.5px;width:423px;height:30px;background:#3d3d3d;border-radius:6px;"></div>
<svg style="position:absolute;left:1499px;top:944.5px;" width="10" height="14" viewBox="0 0 10 14"><path d="M2 2 L7 7 L2 12" fill="none" stroke="#c8c8c8" stroke-width="1.5"/></svg>
<div class="t" style="left:1514px;top:943.65px;font-size:14px;color:#e0e0e0;">Performance</div>
<svg style="position:absolute;left:1887px;top:948.5px;" width="16" height="6" viewBox="0 0 16 6"><rect x="0" y="0" width="2" height="2" fill="#8a8a8a"/><rect x="0" y="4" width="2" height="2" fill="#8a8a8a"/><rect x="4" y="0" width="2" height="2" fill="#8a8a8a"/><rect x="4" y="4" width="2" height="2" fill="#8a8a8a"/><rect x="8" y="0" width="2" height="2" fill="#8a8a8a"/><rect x="8" y="4" width="2" height="2" fill="#8a8a8a"/><rect x="12" y="0" width="2" height="2" fill="#8a8a8a"/><rect x="12" y="4" width="2" height="2" fill="#8a8a8a"/></svg>
<div style="left:1487px;top:968.5px;width:423px;height:30px;background:#3d3d3d;border-radius:6px;"></div>
<svg style="position:absolute;left:1499px;top:977.5px;" width="10" height="14" viewBox="0 0 10 14"><path d="M2 2 L7 7 L2 12" fill="none" stroke="#c8c8c8" stroke-width="1.5"/></svg>
<div class="t" style="left:1514px;top:976.65px;font-size:14px;color:#e0e0e0;">Bake</div>
<svg style="position:absolute;left:1887px;top:981.5px;" width="16" height="6" viewBox="0 0 16 6"><rect x="0" y="0" width="2" height="2" fill="#8a8a8a"/><rect x="0" y="4" width="2" height="2" fill="#8a8a8a"/><rect x="4" y="0" width="2" height="2" fill="#8a8a8a"/><rect x="4" y="4" width="2" height="2" fill="#8a8a8a"/><rect x="8" y="0" width="2" height="2" fill="#8a8a8a"/><rect x="8" y="4" width="2" height="2" fill="#8a8a8a"/><rect x="12" y="0" width="2" height="2" fill="#8a8a8a"/><rect x="12" y="4" width="2" height="2" fill="#8a8a8a"/></svg>
<svg style="position:absolute;left:1854px;top:745px;" width="24" height="20" viewBox="0 0 24 20"><circle cx="4" cy="4" r="2.2" fill="#ddd"/><circle cx="4" cy="10" r="2.2" fill="#ddd"/><circle cx="4" cy="16" r="2.2" fill="#ddd"/><path d="M9 4 H20 M9 10 H20 M9 16 H20" stroke="#ddd" stroke-width="1.5"/></svg>
<div style="left:1487px;top:1001px;width:423px;height:2px;background:#3d3d3d;"></div>
<div style="left:3px;top:974px;width:1435px;height:30px;background:#2b2b2b;border-radius:6px;"></div>
<div style="left:11px;top:979px;width:38px;height:22px;background:#232323;border-radius:4px;"></div>
<div style="left:57px;top:979px;width:88px;height:22px;background:#232323;border-radius:4px;"></div>
<div style="left:145px;top:979px;width:75px;height:22px;background:#232323;border-radius:4px;"></div>
<div style="left:661px;top:979px;width:148px;height:22px;background:#3a3a3a;border-radius:4px;"></div>
<div style="left:1088px;top:979px;width:92px;height:22px;background:#3d3d3d;border-radius:4px;"></div>
<div style="left:1188px;top:979px;width:25px;height:22px;background:#3d3d3d;border-radius:4px;"></div>
<div style="left:1213px;top:979px;width:109px;height:22px;background:#3a3a3a;border-radius:4px;"></div>
<div style="left:1323px;top:979px;width:106px;height:22px;background:#3a3a3a;border-radius:4px;"></div>
<div style="left:605px;top:979px;width:47px;height:22px;background:#262626;border-radius:4px;"></div>
<div style="left:605px;top:979px;width:23px;height:22px;background:#4772b3;border-radius:4px;"></div>
<svg style="position:absolute;left:605px;top:979px;" width="23" height="22" viewBox="0 0 23 22"><circle cx="11.5" cy="11" r="5" fill="#f0f0f0"/></svg>
<svg style="position:absolute;left:633px;top:986px;" width="14" height="10" viewBox="0 0 14 10"><path d="M2 2 L7 7 L12 2" fill="none" stroke="#c8c8c8" stroke-width="1.5"/></svg>
<div class="t" style="left:66px;top:983.15px;font-size:14px;color:#dcdcdc;">Playback</div>
<div class="t" style="left:154px;top:983.15px;font-size:14px;color:#dcdcdc;">Keying</div>
<div class="t" style="left:232px;top:983.15px;font-size:14px;color:#dcdcdc;">View</div>
<div class="t" style="left:282px;top:983.15px;font-size:14px;color:#dcdcdc;">Marker</div>
<svg style="position:absolute;left:131px;top:986px;" width="14" height="10" viewBox="0 0 14 10"><path d="M2 2 L7 7 L12 2" fill="none" stroke="#c8c8c8" stroke-width="1.5"/></svg>
<svg style="position:absolute;left:206px;top:986px;" width="14" height="10" viewBox="0 0 14 10"><path d="M2 2 L7 7 L12 2" fill="none" stroke="#c8c8c8" stroke-width="1.5"/></svg>
<svg style="position:absolute;left:34px;top:986px;" width="14" height="10" viewBox="0 0 14 10"><path d="M2 2 L7 7 L12 2" fill="none" stroke="#c8c8c8" stroke-width="1.5"/></svg>
<svg style="position:absolute;left:14px;top:980px;" width="22" height="20" viewBox="0 0 22 20"><circle cx="10" cy="10" r="8" fill="#e8e8e8"/><path d="M11 4 L6 10 L11 16 Z" fill="#2b2b2b"/></svg>
<div style="left:685.6px;top:979px;width:1px;height:22px;background:#2b2b2b;"></div>
<div style="left:710.2px;top:979px;width:1px;height:22px;background:#2b2b2b;"></div>
<div style="left:734.8px;top:979px;width:1px;height:22px;background:#2b2b2b;"></div>
<div style="left:759.4px;top:979px;width:1px;height:22px;background:#2b2b2b;"></div>
<div style="left:784.0px;top:979px;width:1px;height:22px;background:#2b2b2b;"></div>
<svg style="position:absolute;left:661.0px;top:979px;" width="24" height="22" viewBox="0 0 24 22"><rect x="4" y="5" width="2" height="12" fill="#e0e0e0"/><path d="M17 5 L8 11 L17 17Z" fill="#e0e0e0"/></svg>
<svg style="position:absolute;left:685.6px;top:979px;" width="24" height="22" viewBox="0 0 24 22"><path d="M3 11 L8 5 L11 11 L8 17Z M12 11 L20 5 V17Z" fill="#e0e0e0"/></svg>
<svg style="position:absolute;left:710.2px;top:979px;" width="24" height="22" viewBox="0 0 24 22"><path d="M17 4 L6 11 L17 18Z" fill="#e0e0e0"/></svg>
<svg style="position:absolute;left:734.8px;top:979px;" width="24" height="22" viewBox="0 0 24 22"><path d="M7 4 L18 11 L7 18Z" fill="#e0e0e0"/></svg>
<svg style="position:absolute;left:759.4px;top:979px;" width="24" height="22" viewBox="0 0 24 22"><path d="M3 5 L11 11 L3 17Z M12 11 L16 5 L20 11 L16 17Z" fill="#e0e0e0"/></svg>
<svg style="position:absolute;left:784.0px;top:979px;" width="24" height="22" viewBox="0 0 24 22"><path d="M6 5 L15 11 L6 17Z" fill="#e0e0e0"/><rect x="17" y="5" width="2" height="12" fill="#e0e0e0"/></svg>
<div class="t" style="left:834px;width:600px;text-align:center;top:983.95px;font-size:14px;color:#e0e0e0;">12</div>
<svg style="position:absolute;left:1189px;top:980px;" width="24" height="20" viewBox="0 0 24 20"><circle cx="11" cy="11" r="7" fill="none" stroke="#ddd" stroke-width="1.5"/><path d="M11 7 V11 H14 M9 2 H13 M16 3 L18 5" fill="none" stroke="#ddd" stroke-width="1.5"/></svg>
<div class="t" style="left:1230.5px;top:983.95px;font-size:14px;color:#dcdcdc;">Start</div>
<div class="t" style="left:1297.7px;top:983.95px;font-size:14px;color:#dcdcdc;">0</div>
<div class="t" style="left:1342.5px;top:983.95px;font-size:14px;color:#dcdcdc;">End</div>
<div class="t" style="left:1396px;top:983.95px;font-size:14px;color:#dcdcdc;">19</div>
<div style="left:0px;top:1004px;width:1920px;height:26px;background:#1e1e1e;"></div>
<svg style="position:absolute;left:14px;top:1008px;" width="16" height="20" viewBox="0 0 16 20"><rect x="2" y="1.5" width="12" height="17" rx="4" fill="none" stroke="#bbb" stroke-width="1.5"/><rect x="3" y="2" width="5" height="7" fill="#bbb"/></svg>
<div class="t" style="left:43.6px;top:1010.15px;font-size:14px;color:#9a9a9a;">Select</div>
<svg style="position:absolute;left:295px;top:1008px;" width="16" height="20" viewBox="0 0 16 20"><rect x="2" y="1.5" width="12" height="17" rx="4" fill="none" stroke="#bbb" stroke-width="1.5"/><rect x="7" y="3" width="2" height="5" fill="#bbb"/></svg>
<div class="t" style="left:324px;top:1010.15px;font-size:14px;color:#9a9a9a;">Pan View</div>
<svg style="position:absolute;left:576px;top:1008px;" width="16" height="20" viewBox="0 0 16 20"><rect x="2" y="1.5" width="12" height="17" rx="4" fill="none" stroke="#bbb" stroke-width="1.5"/><rect x="8" y="2" width="5" height="7" fill="#bbb"/></svg>
<div class="t" style="left:605px;top:1010.15px;font-size:14px;color:#9a9a9a;">Select</div>
<div class="t" style="left:1310px;width:600px;text-align:right;top:1009.65px;font-size:14px;color:#8a8a8a;">3.2.2</div>
<div style="left:0px;top:1030px;width:1920px;height:50px;background:#111111;"></div>
<div style="left:374px;top:1030px;width:61px;height:50px;background:#2e2e2e;"></div>
<svg style="position:absolute;left:20px;top:1045px;" width="22" height="22" viewBox="0 0 22 22"><rect x="1" y="1" width="9" height="9" fill="#fff"/><rect x="11" y="1" width="10" height="9" fill="#fff"/><rect x="1" y="11" width="9" height="10" fill="#fff"/><rect x="11" y="11" width="10" height="10" fill="#fff"/></svg>
<svg style="position:absolute;left:79px;top:1041px;" width="28" height="28" viewBox="0 0 28 28"><circle cx="14" cy="14" r="13" fill="#e8eef8"/><path d="M8 10 L14 16 L20 10 V20 H8Z" fill="#2a6ad0"/></svg>
<svg style="position:absolute;left:142px;top:1041px;" width="28" height="28" viewBox="0 0 28 28"><circle cx="14" cy="14" r="13" fill="#db4437"/><path d="M14 14 L26 10 A13 13 0 0 1 8 25Z" fill="#0f9d58"/><path d="M14 14 L8 25 A13 13 0 0 1 3 8Z" fill="#f4b400"/><circle cx="14" cy="14" r="6" fill="#4285f4" stroke="#fff" stroke-width="2"/><circle cx="21" cy="21" r="6" fill="#8a6a50"/></svg>
<svg style="position:absolute;left:203px;top:1041px;" width="28" height="28" viewBox="0 0 28 28"><path d="M2 5 H11 L13 8 H26 V24 H2Z" fill="#f0c040"/><rect x="2" y="10" width="24" height="14" fill="#f8d860"/><rect x="9" y="16" width="10" height="6" fill="#3a8ad0"/></svg>
<svg style="position:absolute;left:265px;top:1041px;" width="28" height="28" viewBox="0 0 28 28"><path d="M8 3 L24 6 L20 25 L4 22Z" fill="#a8d8e8"/><path d="M8 3 L24 6 L23 9 L7 6Z" fill="#5ab0d0"/></svg>
<svg style="position:absolute;left:327px;top:1041px;" width="28" height="28" viewBox="0 0 28 28"><path d="M20 2 L26 5 V23 L20 26 L8 15 L3 19 L1 17 V11 L3 9 L8 13Z" fill="#2a8ae0"/><path d="M20 8 V20 L12 14Z" fill="#111"/></svg>
<svg style="position:absolute;left:389px;top:1040px;" width="32" height="30" viewBox="0 0 32 30"><path d="M4 22 L13 15.5 M3 12 L14 12 M12.5 8.5 L19.5 4" stroke="#e87d0d" stroke-width="3.8" stroke-linecap="round"/><circle cx="20" cy="16" r="7.5" fill="#fff" stroke="#e87d0d" stroke-width="3.8"/><circle cx="20" cy="16" r="3" fill="#265787"/></svg>
<svg style="position:absolute;left:451px;top:1041px;" width="28" height="28" viewBox="0 0 28 28"><rect x="3" y="2" width="22" height="24" rx="3" fill="#e8f0f8"/><rect x="3" y="2" width="22" height="17" rx="3" fill="#1a3a4a"/><path d="M11 6 L18 10 L11 14Z" fill="#4ad0b0"/></svg>
<svg style="position:absolute;left:513px;top:1041px;" width="28" height="28" viewBox="0 0 28 28"><circle cx="13" cy="13" r="12" fill="#5865f2"/><path d="M7 10 Q13 6 19 10 L20 17 Q13 20 6 17Z" fill="#fff"/><circle cx="21" cy="21" r="6" fill="#e84a5a" stroke="#fff" stroke-width="1.5"/></svg>
<div style="left:131px;top:1077px;width:51px;height:3px;background:#8a9aae;"></div>
<div style="left:193px;top:1077px;width:50px;height:3px;background:#8a9aae;"></div>
<div style="left:255px;top:1077px;width:50px;height:3px;background:#8a9aae;"></div>
<div style="left:374px;top:1077px;width:61px;height:3px;background:#8a9aae;"></div>
<div style="left:503px;top:1077px;width:50px;height:3px;background:#8a9aae;"></div>
<svg style="position:absolute;left:1691px;top:1047px;" width="20" height="14" viewBox="0 0 20 14"><path d="M2 11 L10 3 L18 11" fill="none" stroke="#ddd" stroke-width="1.5"/></svg>
<div class="t" style="left:1725px;top:1049.45px;font-size:14px;color:#e8e8e8;">ENG</div>
<div class="t" style="left:1507.5px;width:600px;text-align:center;top:1036.95px;font-size:14px;color:#e8e8e8;">20:20</div>
<div class="t" style="left:1507.5px;width:600px;text-align:center;top:1058.43px;font-size:15.2px;color:#e8e8e8;">08/11/2022</div>
<svg style="position:absolute;left:1867px;top:1043px;" width="24" height="22" viewBox="0 0 24 22"><path d="M2 2 H22 V16 H10 L6 20 V16 H2Z" fill="#eee"/><path d="M6 6 H18 M6 9 H18 M6 12 H14" stroke="#333" stroke-width="1.2"/></svg>
<div style="left:1914px;top:1030px;width:1px;height:50px;background:#444;"></div>
<svg style="position:absolute;left:10px;top:35px;" width="24" height="22" viewBox="0 0 24 22"><path d="M4 16 L10 11.5 M3 9 L11 9 M9.5 6.5 L14.5 3" stroke="#e8e8e8" stroke-width="2.8" stroke-linecap="round"/><circle cx="15" cy="12" r="5.6" fill="#1b1b1b" stroke="#e8e8e8" stroke-width="2.8"/><circle cx="15" cy="12" r="2" fill="#e8e8e8"/></svg>
<svg style="position:absolute;left:1px;top:4px;" width="24" height="22" viewBox="0 0 24 22"><path d="M4 16 L10 11.5 M3 9 L11 9 M9.5 6.5 L14.5 3" stroke="#e0902a" stroke-width="2.8" stroke-linecap="round"/><circle cx="15" cy="12" r="5.6" fill="#f8e8d0" stroke="#e0902a" stroke-width="2.8"/><circle cx="15" cy="12" r="2" fill="#404040"/></svg>
<svg style="position:absolute;left:1430px;top:36px;" width="26" height="20" viewBox="0 0 26 20"><path d="M7 2 L2 11 Q2 15 7 15 Q11 15 11 11 Z" fill="#ddd"/><circle cx="14" cy="13" r="5" fill="none" stroke="#ddd" stroke-width="1.6"/><circle cx="17" cy="4" r="2.5" fill="#ddd"/></svg>
<svg style="position:absolute;left:1452px;top:43px;" width="11" height="7" viewBox="0 0 11 7"><path d="M1 1 L5.5 5.5 L10 1" fill="none" stroke="#d0d0d0" stroke-width="1.4"/></svg>
<svg style="position:absolute;left:1618px;top:36px;" width="22" height="20" viewBox="0 0 22 20"><path d="M6 3 H13 L17 7 V15 H6Z" fill="none" stroke="#bbb" stroke-width="1.5"/><path d="M3 6 V18 H14" fill="none" stroke="#bbb" stroke-width="1.5"/></svg>
<svg style="position:absolute;left:1643px;top:38px;" width="18" height="16" viewBox="0 0 18 16"><path d="M3 3 L14 14 M14 3 L3 14" stroke="#777" stroke-width="1.5"/></svg>
<svg style="position:absolute;left:1677px;top:36px;" width="22" height="20" viewBox="0 0 22 20"><rect x="7" y="2" width="12" height="11" fill="none" stroke="#ddd" stroke-width="1.6"/><path d="M4 5 V16 H16" fill="none" stroke="#ddd" stroke-width="1.4"/><path d="M9 11 L12 6 L16 11Z" fill="#ddd"/><circle cx="16" cy="5" r="1.2" fill="#ddd"/></svg>
<svg style="position:absolute;left:1698px;top:43px;" width="11" height="7" viewBox="0 0 11 7"><path d="M1 1 L5.5 5.5 L10 1" fill="none" stroke="#d0d0d0" stroke-width="1.4"/></svg>
<svg style="position:absolute;left:1864px;top:36px;" width="22" height="20" viewBox="0 0 22 20"><path d="M6 3 H13 L17 7 V15 H6Z" fill="none" stroke="#bbb" stroke-width="1.5"/><path d="M3 6 V18 H14" fill="none" stroke="#bbb" stroke-width="1.5"/></svg>
<svg style="position:absolute;left:1888px;top:38px;" width="18" height="16" viewBox="0 0 18 16"><path d="M3 3 L14 14 M14 3 L3 14" stroke="#777" stroke-width="1.5"/></svg>
<svg style="position:absolute;left:15px;top:70px;" width="20" height="18" viewBox="0 0 20 18"><path d="M2 17 L8 7 L10 8 L4 17Z" fill="#e0e0e0"/><rect x="9" y="4" width="3" height="13" fill="#e0e0e0"/><rect x="13" y="2" width="4" height="15" fill="#e0e0e0"/></svg>
<svg style="position:absolute;left:38px;top:77px;" width="11" height="7" viewBox="0 0 11 7"><path d="M1 1 L5.5 5.5 L10 1" fill="none" stroke="#d0d0d0" stroke-width="1.4"/></svg>
<svg style="position:absolute;left:265px;top:71px;" width="22" height="18" viewBox="0 0 22 18"><g fill="none" stroke="#e0e0e0" stroke-width="1.4"><rect x="1.5" y="1.5" width="5" height="6"/><rect x="12.5" y="1.5" width="5" height="6"/><rect x="1.5" y="11" width="5" height="6"/><rect x="12.5" y="11" width="5" height="6"/></g></svg>
<svg style="position:absolute;left:288px;top:77px;" width="11" height="7" viewBox="0 0 11 7"><path d="M1 1 L5.5 5.5 L10 1" fill="none" stroke="#d0d0d0" stroke-width="1.4"/></svg>
<svg style="position:absolute;left:311px;top:70px;" width="20" height="20" viewBox="0 0 20 20"><circle cx="12" cy="8" r="5.5" fill="none" stroke="#ddd" stroke-width="1.5"/><line x1="8" y1="12" x2="2" y2="18" stroke="#ddd" stroke-width="1.6"/></svg>
<svg style="position:absolute;left:515px;top:70px;" width="20" height="20" viewBox="0 0 20 20"><path d="M2 2 H18 L11.5 10 V18 L8.5 16 V10 Z" fill="none" stroke="#e0e0e0" stroke-width="1.5"/></svg>
<svg style="position:absolute;left:540px;top:77px;" width="11" height="7" viewBox="0 0 11 7"><path d="M1 1 L5.5 5.5 L10 1" fill="none" stroke="#d0d0d0" stroke-width="1.4"/></svg>
<svg style="position:absolute;left:561px;top:70px;" width="20" height="20" viewBox="0 0 20 20"><g fill="#e8e8e8"><circle cx="10" cy="10" r="6"/><rect x="8" y="1.5" width="4" height="4" transform="rotate(0 10 10)"/><rect x="8" y="1.5" width="4" height="4" transform="rotate(45 10 10)"/><rect x="8" y="1.5" width="4" height="4" transform="rotate(90 10 10)"/><rect x="8" y="1.5" width="4" height="4" transform="rotate(135 10 10)"/><rect x="8" y="1.5" width="4" height="4" transform="rotate(180 10 10)"/><rect x="8" y="1.5" width="4" height="4" transform="rotate(225 10 10)"/><rect x="8" y="1.5" width="4" height="4" transform="rotate(270 10 10)"/><rect x="8" y="1.5" width="4" height="4" transform="rotate(315 10 10)"/></g><circle cx="10" cy="10" r="2.2" fill="#4a4a4a"/></svg>
<svg style="position:absolute;left:609px;top:69px;" width="22" height="20" viewBox="0 0 22 20"><circle cx="13" cy="6" r="4.5" fill="#ddd"/><path d="M2 12 H20 M3 18 H19 M6 10 L4 19 M15 10 L14 19" stroke="#ddd" stroke-width="1.5"/></svg>
<svg style="position:absolute;left:632px;top:77px;" width="11" height="7" viewBox="0 0 11 7"><path d="M1 1 L5.5 5.5 L10 1" fill="none" stroke="#d0d0d0" stroke-width="1.4"/></svg>
<svg style="position:absolute;left:655px;top:69px;" width="22" height="20" viewBox="0 0 22 20"><rect x="1" y="2" width="5" height="5" fill="#ddd"/><circle cx="11" cy="3" r="1.8" fill="#ddd"/><path d="M11 5 V11 L7 18 M11 11 L15 18 M7 7 H17" fill="none" stroke="#ddd" stroke-width="1.4"/></svg>
<svg style="position:absolute;left:774px;top:78px;" width="11" height="7" viewBox="0 0 11 7"><path d="M1 1 L5.5 5.5 L10 1" fill="none" stroke="#d0d0d0" stroke-width="1.4"/></svg>
<svg style="position:absolute;left:975px;top:69px;" width="22" height="20" viewBox="0 0 22 20"><path d="M3 3 L9 1 V18 L3 16Z" fill="none" stroke="#ccc" stroke-width="1.3"/><circle cx="7" cy="10" r="2.3" fill="none" stroke="#ddd" stroke-width="1.4"/><path d="M9 10 H18 M15 7 L18 10 L15 13" fill="none" stroke="#ddd" stroke-width="1.4"/></svg>
<svg style="position:absolute;left:1058px;top:77px;" width="11" height="7" viewBox="0 0 11 7"><path d="M1 1 L5.5 5.5 L10 1" fill="none" stroke="#d0d0d0" stroke-width="1.4"/></svg>
<svg style="position:absolute;left:1081px;top:69px;" width="22" height="20" viewBox="0 0 22 20"><circle cx="13" cy="7" r="5.5" fill="none" stroke="#ddd" stroke-width="1.5"/><circle cx="8" cy="13" r="5.5" fill="none" stroke="#ddd" stroke-width="1.5"/><circle cx="10.5" cy="10" r="1.8" fill="#ddd"/></svg>
<svg style="position:absolute;left:1103px;top:77px;" width="11" height="7" viewBox="0 0 11 7"><path d="M1 1 L5.5 5.5 L10 1" fill="none" stroke="#d0d0d0" stroke-width="1.4"/></svg>
<svg style="position:absolute;left:1125px;top:69px;" width="22" height="20" viewBox="0 0 22 20"><path d="M6 14 L4 12 Q1 7 6 3 Q11 0 15 4 Q18 8 15 12 L11 8" fill="none" stroke="#999" stroke-width="2"/></svg>
<svg style="position:absolute;left:1149px;top:69px;" width="22" height="20" viewBox="0 0 22 20"><rect x="13" y="1" width="5" height="5" fill="#ddd"/><path d="M2 9 V18 M18 9 V18 M2 13.5 H18 M7 11 V16 M12 11 V16" stroke="#ddd" stroke-width="1.4"/></svg>
<svg style="position:absolute;left:1174px;top:77px;" width="11" height="7" viewBox="0 0 11 7"><path d="M1 1 L5.5 5.5 L10 1" fill="none" stroke="#d0d0d0" stroke-width="1.4"/></svg>
<svg style="position:absolute;left:1210px;top:68px;" width="24" height="22" viewBox="0 0 24 22"><path d="M7 7 Q13 0 19 7 Q13 13 7 7Z" fill="none" stroke="#e8e8e8" stroke-width="1.5"/><circle cx="13" cy="7" r="2" fill="#e8e8e8"/><path d="M2 10 L10 14 L6 15 L4 20 Z" fill="#e8e8e8"/></svg>
<svg style="position:absolute;left:1231px;top:77px;" width="11" height="7" viewBox="0 0 11 7"><path d="M1 1 L5.5 5.5 L10 1" fill="none" stroke="#d0d0d0" stroke-width="1.4"/></svg>
<svg style="position:absolute;left:1254px;top:68px;" width="22" height="22" viewBox="0 0 22 22"><path d="M3 7 Q14 6 16 20" fill="none" stroke="#e8eef8" stroke-width="1.5"/><circle cx="5" cy="17" r="2.2" fill="none" stroke="#e8eef8" stroke-width="1.5"/><path d="M7 15 L17 5 M12 4 H18 V10" fill="none" stroke="#e8eef8" stroke-width="1.5"/></svg>
<svg style="position:absolute;left:1284px;top:77px;" width="11" height="7" viewBox="0 0 11 7"><path d="M1 1 L5.5 5.5 L10 1" fill="none" stroke="#d0d0d0" stroke-width="1.4"/></svg>
<svg style="position:absolute;left:1310px;top:68px;" width="22" height="22" viewBox="0 0 22 22"><circle cx="13" cy="9" r="6.5" fill="#eee"/><path d="M7 10 A6.5 6.5 0 1 0 13 17" fill="none" stroke="#cde" stroke-width="1.6"/><path d="M11 6 L14 11" stroke="#4772b3" stroke-width="1.2"/></svg>
<svg style="position:absolute;left:1340px;top:77px;" width="11" height="7" viewBox="0 0 11 7"><path d="M1 1 L5.5 5.5 L10 1" fill="none" stroke="#d0d0d0" stroke-width="1.4"/></svg>
<svg style="position:absolute;left:1366px;top:68px;" width="22" height="22" viewBox="0 0 22 22"><rect x="6" y="2" width="13" height="13" fill="none" stroke="#777" stroke-width="1.3"/><rect x="2.5" y="6" width="13" height="13" fill="none" stroke="#777" stroke-width="1.3"/></svg>
<svg style="position:absolute;left:1398px;top:68px;" width="22" height="22" viewBox="0 0 22 22"><circle cx="11" cy="11" r="8.5" fill="none" stroke="#ddd" stroke-width="1.5"/><ellipse cx="11" cy="11" rx="4" ry="8.5" fill="none" stroke="#ddd" stroke-width="1.3"/><path d="M2.5 8 H19.5 M2.5 14 H19.5" stroke="#ddd" stroke-width="1.3"/></svg>
<svg style="position:absolute;left:1421px;top:68px;" width="20" height="22" viewBox="0 0 20 22"><circle cx="11" cy="11" r="8.5" fill="#ddd"/></svg>
<svg style="position:absolute;left:735px;top:101px;" width="22" height="22" viewBox="0 0 22 22"><path d="M9 2 V9 M6 5 L9 2 L12 5" fill="none" stroke="#ddd" stroke-width="1.3"/><circle cx="9" cy="13" r="2.5" fill="#eee"/><path d="M12 15 H20 M17 12 L20 15 L17 18 M7 15 L2 20" fill="none" stroke="#ddd" stroke-width="1.3"/></svg>
<svg style="position:absolute;left:840px;top:109px;" width="11" height="7" viewBox="0 0 11 7"><path d="M1 1 L5.5 5.5 L10 1" fill="none" stroke="#d0d0d0" stroke-width="1.4"/></svg>
<svg style="position:absolute;left:996px;top:109px;" width="11" height="7" viewBox="0 0 11 7"><path d="M1 1 L5.5 5.5 L10 1" fill="none" stroke="#d0d0d0" stroke-width="1.4"/></svg>
<svg style="position:absolute;left:1262px;top:100px;" width="22" height="24" viewBox="0 0 22 24"><path d="M9 4 Q4 1 3 6 Q3 10 7 11 Q2 13 3 17 Q5 21 9 18" fill="none" stroke="#999" stroke-width="1.4"/><path d="M13 4 Q18 1 19 6 Q19 10 15 11 Q20 13 19 17 Q17 21 13 18" fill="none" stroke="#ddd" stroke-width="1.4"/><path d="M11 2 V22" stroke="#eee" stroke-width="1.4" stroke-dasharray="2 1.5"/></svg>
<svg style="position:absolute;left:1414px;top:109px;" width="11" height="7" viewBox="0 0 11 7"><path d="M1 1 L5.5 5.5 L10 1" fill="none" stroke="#d0d0d0" stroke-width="1.4"/></svg>
<svg style="position:absolute;left:1438px;top:111px;" width="10" height="14" viewBox="0 0 10 14"><path d="M2 2 L7 7 L2 12" fill="none" stroke="#aaa" stroke-width="1.5"/></svg>
<svg style="position:absolute;left:581px;top:113px;" width="10" height="14" viewBox="0 0 10 14"><path d="M8 2 L3 7 L8 12" fill="none" stroke="#aaa" stroke-width="1.5"/></svg>
<svg style="position:absolute;left:1907px;top:113px;" width="10" height="14" viewBox="0 0 10 14"><path d="M8 2 L3 7 L8 12" fill="none" stroke="#aaa" stroke-width="1.5"/></svg>
<svg style="position:absolute;left:613px;top:143px;" width="28" height="28" viewBox="0 0 28 28"><rect x="4" y="4" width="20" height="20" fill="none" stroke="#d8c8a0" stroke-width="2" stroke-dasharray="4 2.5"/><path d="M11 8 L20 14 L11 20Z" fill="#e8e8e8"/></svg>
<svg style="position:absolute;left:613px;top:185px;" width="28" height="28" viewBox="0 0 28 28"><circle cx="14" cy="14" r="10" fill="none" stroke="#e8e8e8" stroke-width="2" stroke-dasharray="6 2"/><circle cx="14" cy="14" r="10" fill="none" stroke="#b04050" stroke-width="2" stroke-dasharray="2 6" stroke-dashoffset="-6"/><path d="M14 7 V11 M14 17 V21 M7 14 H11 M17 14 H21" stroke="#bbb" stroke-width="1.5"/></svg>
<svg style="position:absolute;left:613px;top:235px;" width="28" height="28" viewBox="0 0 28 28"><path d="M14 1 L18 6 H10Z M14 27 L18 22 H10Z M1 14 L6 10 V18Z M27 14 L22 10 V18Z" fill="#e8e8e8"/><path d="M14 7 V11 M14 17 V21 M7 14 H11 M17 14 H21" stroke="#e8e8e8" stroke-width="2"/></svg>
<svg style="position:absolute;left:613px;top:278px;" width="28" height="28" viewBox="0 0 28 28"><path d="M5 12 A9.5 9.5 0 0 1 23 10 M23 16 A9.5 9.5 0 0 1 5 18" fill="none" stroke="#e8e8e8" stroke-width="1.6"/><path d="M14 9 L19 14 L14 19 L9 14Z" fill="#aaa"/><path d="M1 12 H9 L5 18Z M19 16 H27 L23 10Z" fill="#e8e8e8"/></svg>
<svg style="position:absolute;left:613px;top:321px;" width="28" height="28" viewBox="0 0 28 28"><rect x="4" y="12" width="12" height="12" fill="#e8e8e8"/><path d="M8 12 V4 H24 V24 H16" fill="none" stroke="#ccc" stroke-width="1.5"/><path d="M15 13 L22 6 M17 6 H22 V11" fill="none" stroke="#e8e8e8" stroke-width="1.5"/></svg>
<svg style="position:absolute;left:613px;top:364px;" width="28" height="28" viewBox="0 0 28 28"><circle cx="14" cy="14" r="11" fill="none" stroke="#dde6f4" stroke-width="1.5" stroke-dasharray="6 3"/><rect x="9" y="9" width="10" height="10" fill="#e8eef8"/><path d="M14 1 L17 5 H11Z M14 27 L17 23 H11Z M1 14 L5 11 V17Z M27 14 L23 11 V17Z" fill="#dde6f4"/></svg>
<svg style="position:absolute;left:613px;top:414px;" width="28" height="28" viewBox="0 0 28 28"><path d="M4 20 L18 6 L22 10 L8 24 L3 25Z" fill="none" stroke="#e8e8e8" stroke-width="1.8"/><path d="M18 6 L22 10 L24 8 L20 4Z" fill="#e8e8e8"/><path d="M6 22 Q12 16 17 20 Q22 24 26 19" fill="none" stroke="#5ac0a0" stroke-width="1.5"/></svg>
<svg style="position:absolute;left:613px;top:456px;" width="28" height="28" viewBox="0 0 28 28"><path d="M6 2 V24 H26" fill="none" stroke="#e8e8e8" stroke-width="2.5"/><path d="M9 23 V10 A13 13 0 0 1 23 23Z" fill="#8ad0b0"/><path d="M8 24 H26 M10 21 V24 M14 21 V24 M18 21 V24 M22 21 V24" stroke="#e8e8e8" stroke-width="1"/></svg>
<svg style="position:absolute;left:613px;top:505px;" width="28" height="28" viewBox="0 0 28 28"><path d="M3 8 Q8 18 14 18 Q20 18 25 8" fill="none" stroke="#e8e8e8" stroke-width="1.5" stroke-dasharray="2 2"/><circle cx="3" cy="8" r="1.8" fill="#e8e8e8"/><circle cx="25" cy="8" r="1.8" fill="#e8e8e8"/><path d="M14 14 L18 18 L14 22 L10 18Z" fill="#8ad0b0"/></svg>
<svg style="position:absolute;left:646px;top:170px;" width="8" height="8" viewBox="0 0 8 8"><path d="M7 1 V7 H1Z" fill="#aaa"/></svg>
<svg style="position:absolute;left:646px;top:348px;" width="8" height="8" viewBox="0 0 8 8"><path d="M7 1 V7 H1Z" fill="#aaa"/></svg>
<svg style="position:absolute;left:646px;top:444px;" width="8" height="8" viewBox="0 0 8 8"><path d="M7 1 V7 H1Z" fill="#aaa"/></svg>
<svg style="position:absolute;left:646px;top:532px;" width="8" height="8" viewBox="0 0 8 8"><path d="M7 1 V7 H1Z" fill="#aaa"/></svg>
<svg style="position:absolute;left:1450px;top:77px;" width="11" height="7" viewBox="0 0 11 7"><path d="M1 1 L5.5 5.5 L10 1" fill="none" stroke="#d0d0d0" stroke-width="1.4"/></svg>
<svg style="position:absolute;left:1474px;top:69px;" width="22" height="20" viewBox="0 0 22 20"><circle cx="13" cy="7" r="5.5" fill="none" stroke="#ddd" stroke-width="1.5"/><circle cx="8" cy="13" r="5.5" fill="none" stroke="#ddd" stroke-width="1.5"/><circle cx="10.5" cy="10" r="1.8" fill="#ddd"/></svg>
<svg style="position:absolute;left:1496px;top:77px;" width="11" height="7" viewBox="0 0 11 7"><path d="M1 1 L5.5 5.5 L10 1" fill="none" stroke="#d0d0d0" stroke-width="1.4"/></svg>
<svg style="position:absolute;left:1518px;top:69px;" width="22" height="20" viewBox="0 0 22 20"><path d="M6 14 L4 12 Q1 7 6 3 Q11 0 15 4 Q18 8 15 12 L11 8" fill="none" stroke="#999" stroke-width="2"/></svg>
<svg style="position:absolute;left:1541px;top:69px;" width="22" height="20" viewBox="0 0 22 20"><rect x="13" y="1" width="5" height="5" fill="#ddd"/><path d="M2 9 V18 M18 9 V18 M2 13.5 H18 M7 11 V16 M12 11 V16" stroke="#ddd" stroke-width="1.4"/></svg>
<svg style="position:absolute;left:1566px;top:77px;" width="11" height="7" viewBox="0 0 11 7"><path d="M1 1 L5.5 5.5 L10 1" fill="none" stroke="#d0d0d0" stroke-width="1.4"/></svg>
<svg style="position:absolute;left:1602px;top:68px;" width="24" height="22" viewBox="0 0 24 22"><path d="M7 7 Q13 0 19 7 Q13 13 7 7Z" fill="none" stroke="#e8e8e8" stroke-width="1.5"/><circle cx="13" cy="7" r="2" fill="#e8e8e8"/><path d="M2 10 L10 14 L6 15 L4 20 Z" fill="#e8e8e8"/></svg>
<svg style="position:absolute;left:1623px;top:77px;" width="11" height="7" viewBox="0 0 11 7"><path d="M1 1 L5.5 5.5 L10 1" fill="none" stroke="#d0d0d0" stroke-width="1.4"/></svg>
<svg style="position:absolute;left:1647px;top:68px;" width="22" height="22" viewBox="0 0 22 22"><path d="M3 7 Q14 6 16 20" fill="none" stroke="#e8eef8" stroke-width="1.5"/><circle cx="5" cy="17" r="2.2" fill="none" stroke="#e8eef8" stroke-width="1.5"/><path d="M7 15 L17 5 M12 4 H18 V10" fill="none" stroke="#e8eef8" stroke-width="1.5"/></svg>
<svg style="position:absolute;left:1676px;top:77px;" width="11" height="7" viewBox="0 0 11 7"><path d="M1 1 L5.5 5.5 L10 1" fill="none" stroke="#d0d0d0" stroke-width="1.4"/></svg>
<svg style="position:absolute;left:1703px;top:68px;" width="22" height="22" viewBox="0 0 22 22"><circle cx="13" cy="9" r="6.5" fill="#eee"/><path d="M7 10 A6.5 6.5 0 1 0 13 17" fill="none" stroke="#cde" stroke-width="1.6"/></svg>
<svg style="position:absolute;left:1733px;top:77px;" width="11" height="7" viewBox="0 0 11 7"><path d="M1 1 L5.5 5.5 L10 1" fill="none" stroke="#d0d0d0" stroke-width="1.4"/></svg>
<svg style="position:absolute;left:1759px;top:68px;" width="22" height="22" viewBox="0 0 22 22"><rect x="6" y="2" width="13" height="13" fill="none" stroke="#777" stroke-width="1.3"/><rect x="2.5" y="6" width="13" height="13" fill="none" stroke="#777" stroke-width="1.3"/></svg>
<svg style="position:absolute;left:1790px;top:68px;" width="22" height="22" viewBox="0 0 22 22"><circle cx="11" cy="11" r="8.5" fill="none" stroke="#ddd" stroke-width="1.5"/><ellipse cx="11" cy="11" rx="4" ry="8.5" fill="none" stroke="#ddd" stroke-width="1.3"/><path d="M2.5 8 H19.5 M2.5 14 H19.5" stroke="#ddd" stroke-width="1.3"/></svg>
<svg style="position:absolute;left:1814px;top:68px;" width="22" height="22" viewBox="0 0 22 22"><circle cx="11" cy="11" r="8.5" fill="#ddd"/></svg>
<svg style="position:absolute;left:1837px;top:68px;" width="22" height="22" viewBox="0 0 22 22"><circle cx="11" cy="11" r="8.5" fill="none" stroke="#eee" stroke-width="2"/><path d="M11 2.5 A8.5 8.5 0 0 1 11 19.5Z M11 11 L4 6 A8.5 8.5 0 0 0 4 16Z" fill="#eee"/></svg>
<svg style="position:absolute;left:1861px;top:68px;" width="22" height="22" viewBox="0 0 22 22"><circle cx="11" cy="11" r="8.5" fill="none" stroke="#ccc" stroke-width="1.5"/><path d="M5 12 A6 6 0 0 1 12 5" fill="none" stroke="#ccc" stroke-width="1.3"/></svg>
<svg style="position:absolute;left:1892px;top:77px;" width="11" height="7" viewBox="0 0 11 7"><path d="M1 1 L5.5 5.5 L10 1" fill="none" stroke="#d0d0d0" stroke-width="1.4"/></svg>
<svg style="position:absolute;left:1458px;top:393px;" width="26" height="20" viewBox="0 0 26 20"><rect x="2" y="1" width="6" height="3" fill="#ddd"/><path d="M4 4 V16 H8 M4 10 H8" fill="none" stroke="#aaa" stroke-width="1"/><rect x="9" y="8" width="8" height="4" fill="#ddd"/><rect x="9" y="14" width="8" height="4" fill="#ddd"/></svg>
<svg style="position:absolute;left:1480px;top:401px;" width="11" height="7" viewBox="0 0 11 7"><path d="M1 1 L5.5 5.5 L10 1" fill="none" stroke="#d0d0d0" stroke-width="1.4"/></svg>
<svg style="position:absolute;left:1502px;top:392px;" width="22" height="22" viewBox="0 0 22 22"><rect x="8" y="2" width="11" height="11" fill="none" stroke="#ddd" stroke-width="1.5"/><path d="M5 5 V16 H16 M3 8 V18 H13" fill="none" stroke="#bbb" stroke-width="1.1"/><path d="M10 11 L13 6 L17 11Z" fill="#ddd"/></svg>
<svg style="position:absolute;left:1525px;top:401px;" width="11" height="7" viewBox="0 0 11 7"><path d="M1 1 L5.5 5.5 L10 1" fill="none" stroke="#d0d0d0" stroke-width="1.4"/></svg>
<svg style="position:absolute;left:1600px;top:393px;" width="20" height="20" viewBox="0 0 20 20"><circle cx="12" cy="8" r="5.5" fill="none" stroke="#ddd" stroke-width="1.5"/><line x1="8" y1="12" x2="2" y2="18" stroke="#ddd" stroke-width="1.6"/></svg>
<svg style="position:absolute;left:1840px;top:393px;" width="20" height="20" viewBox="0 0 20 20"><path d="M2 2 H18 L11.5 10 V18 L8.5 16 V10 Z" fill="none" stroke="#e0e0e0" stroke-width="1.5"/></svg>
<svg style="position:absolute;left:1864px;top:401px;" width="11" height="7" viewBox="0 0 11 7"><path d="M1 1 L5.5 5.5 L10 1" fill="none" stroke="#d0d0d0" stroke-width="1.4"/></svg>
<svg style="position:absolute;left:1886px;top:392px;" width="22" height="22" viewBox="0 0 22 22"><path d="M3 7 H13 M3 7 V19 H17 V12" fill="none" stroke="#ccc" stroke-width="1.5"/><circle cx="16" cy="6" r="4.5" fill="#ddd"/><path d="M16 3.5 V8.5 M13.5 6 H18.5" stroke="#333" stroke-width="1.3"/></svg>
<svg style="position:absolute;left:1457px;top:593px;" width="26" height="20" viewBox="0 0 26 20"><rect x="2" y="2" width="16" height="6" rx="3" fill="#ddd"/><rect x="2" y="11" width="16" height="6" rx="3" fill="#ddd"/><circle cx="14" cy="14" r="2" fill="#333"/></svg>
<svg style="position:absolute;left:1480px;top:601px;" width="11" height="7" viewBox="0 0 11 7"><path d="M1 1 L5.5 5.5 L10 1" fill="none" stroke="#d0d0d0" stroke-width="1.4"/></svg>
<svg style="position:absolute;left:1615px;top:593px;" width="20" height="20" viewBox="0 0 20 20"><circle cx="12" cy="8" r="5.5" fill="none" stroke="#ddd" stroke-width="1.5"/><line x1="8" y1="12" x2="2" y2="18" stroke="#ddd" stroke-width="1.6"/></svg>
<svg style="position:absolute;left:1891px;top:600px;" width="11" height="7" viewBox="0 0 11 7"><path d="M1 1 L5.5 5.5 L10 1" fill="none" stroke="#d0d0d0" stroke-width="1.4"/></svg></div></body></html>
